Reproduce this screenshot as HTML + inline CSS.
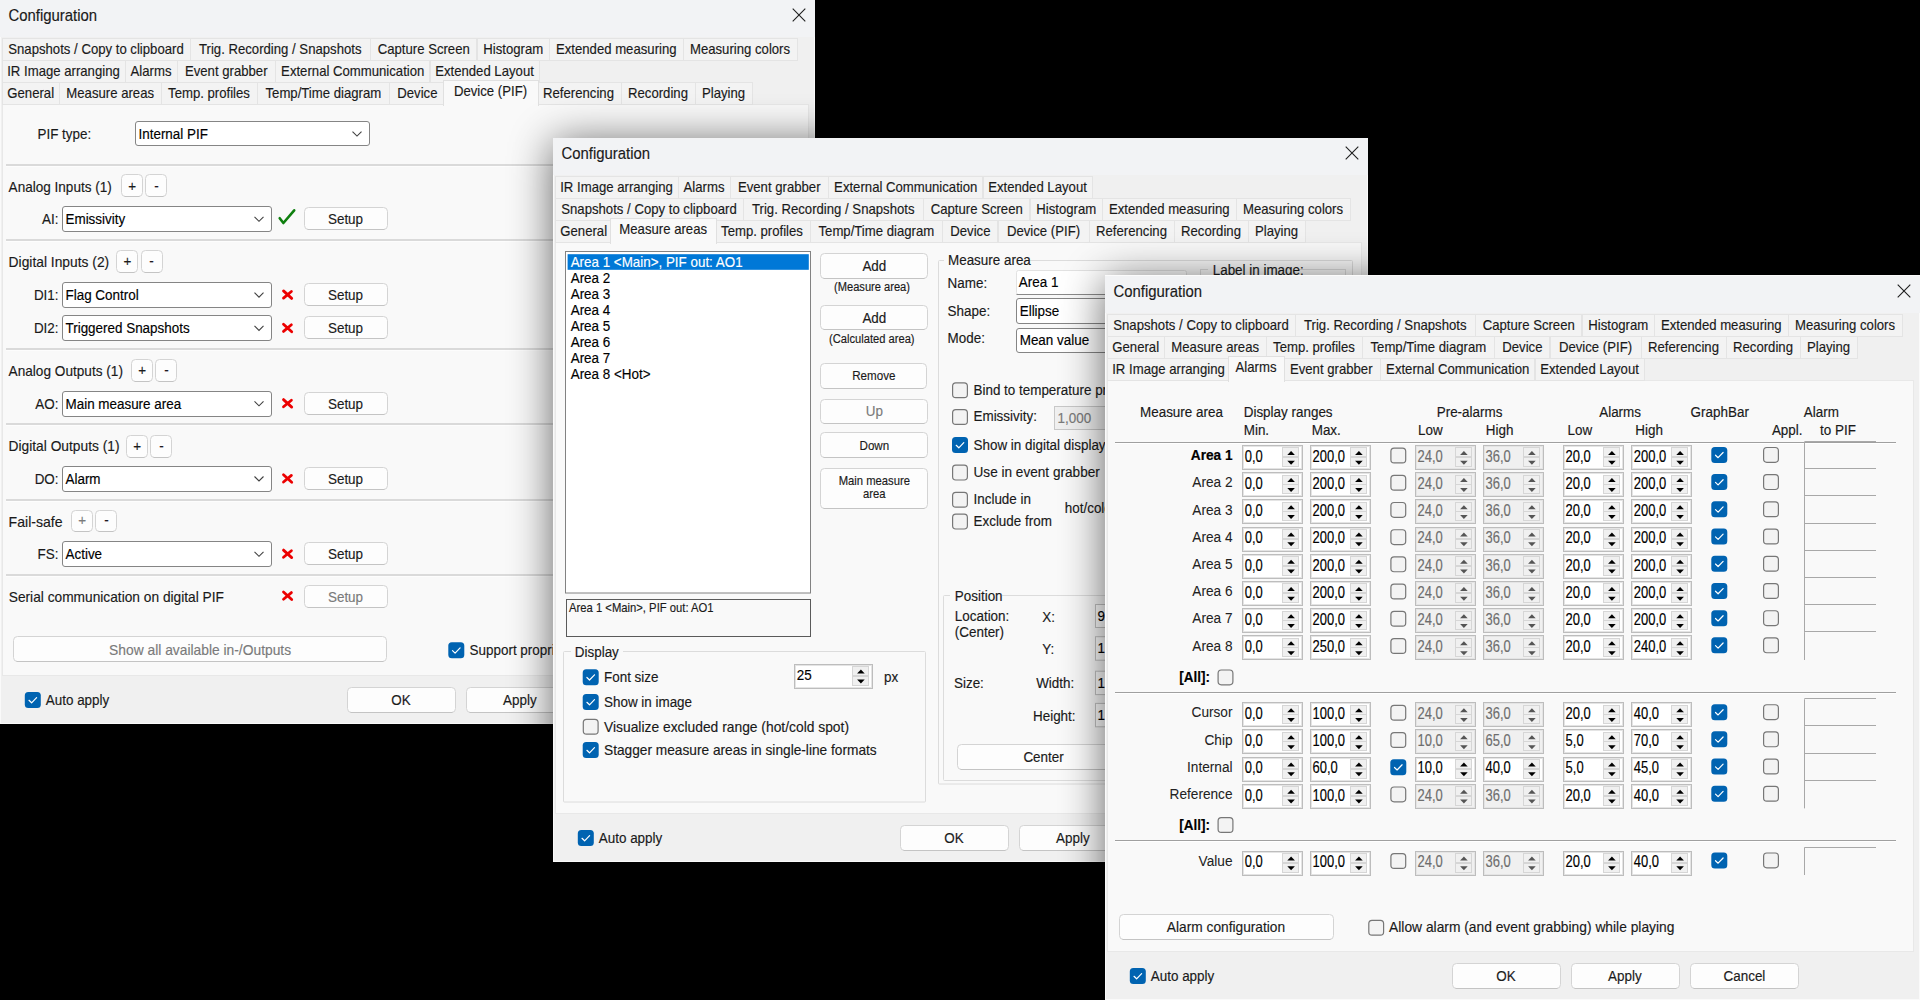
<!DOCTYPE html>
<html><head><meta charset="utf-8"><title>Configuration</title>
<style>html,body{margin:0;padding:0;background:#000;overflow:hidden;width:1920px;height:1000px}
svg{display:block;font-family:"Liberation Sans",sans-serif}</style></head>
<body>
<svg width="1920" height="1000" viewBox="0 0 1920 1000" font-family="Liberation Sans, sans-serif" font-size="13.5">
<defs><filter id="sh" x="-15%" y="-15%" width="130%" height="130%"><feGaussianBlur stdDeviation="22"/></filter></defs>
<rect x="0" y="0" width="1920" height="1000" fill="#000000" />
<g transform="translate(0,0)">
<rect x="0" y="0" width="815" height="724" fill="#f0f0f0" />
<rect x="0.5" y="0.5" width="814" height="723" fill="none" stroke="#fafafa" stroke-width="1" />
<rect x="0" y="0" width="815" height="37" fill="#f2f3f5" />
<text transform="translate(8.5,21.2) scale(0.95,1)" font-size="15.7" fill="#1a1a1a" stroke="#1a1a1a" stroke-width="0.15">Configuration</text>
<path d="M792.7,8.7 L805.3,21.3 M805.3,8.7 L792.7,21.3" stroke="#1f1f1f" fill="none" stroke-width="1.1" />
<rect x="2.5" y="104.5" width="806" height="571" fill="#f9f9f9" stroke="#e8e8e8" stroke-width="1" />
<rect x="2.5" y="38.5" width="188" height="22" fill="#f3f3f3" stroke="#e4e4e4" stroke-width="1" />
<text transform="translate(96,54) scale(0.94,1)" font-size="14" fill="#1a1a1a" text-anchor="middle" stroke="#1a1a1a" stroke-width="0.15">Snapshots / Copy to clipboard</text>
<rect x="190.5" y="38.5" width="180" height="22" fill="#f3f3f3" stroke="#e4e4e4" stroke-width="1" />
<text transform="translate(280.25,54) scale(0.94,1)" font-size="14" fill="#1a1a1a" text-anchor="middle" stroke="#1a1a1a" stroke-width="0.15">Trig. Recording / Snapshots</text>
<rect x="370.5" y="38.5" width="106" height="22" fill="#f3f3f3" stroke="#e4e4e4" stroke-width="1" />
<text transform="translate(423.75,54) scale(0.94,1)" font-size="14" fill="#1a1a1a" text-anchor="middle" stroke="#1a1a1a" stroke-width="0.15">Capture Screen</text>
<rect x="477.5" y="38.5" width="72" height="22" fill="#f3f3f3" stroke="#e4e4e4" stroke-width="1" />
<text transform="translate(513.25,54) scale(0.94,1)" font-size="14" fill="#1a1a1a" text-anchor="middle" stroke="#1a1a1a" stroke-width="0.15">Histogram</text>
<rect x="549.5" y="38.5" width="134" height="22" fill="#f3f3f3" stroke="#e4e4e4" stroke-width="1" />
<text transform="translate(616.25,54) scale(0.94,1)" font-size="14" fill="#1a1a1a" text-anchor="middle" stroke="#1a1a1a" stroke-width="0.15">Extended measuring</text>
<rect x="683.5" y="38.5" width="114" height="22" fill="#f3f3f3" stroke="#e4e4e4" stroke-width="1" />
<text transform="translate(740,54) scale(0.94,1)" font-size="14" fill="#1a1a1a" text-anchor="middle" stroke="#1a1a1a" stroke-width="0.15">Measuring colors</text>
<rect x="2.5" y="60.5" width="123" height="22" fill="#f3f3f3" stroke="#e4e4e4" stroke-width="1" />
<text transform="translate(63.5,76) scale(0.94,1)" font-size="14" fill="#1a1a1a" text-anchor="middle" stroke="#1a1a1a" stroke-width="0.15">IR Image arranging</text>
<rect x="125.5" y="60.5" width="52" height="22" fill="#f3f3f3" stroke="#e4e4e4" stroke-width="1" />
<text transform="translate(151,76) scale(0.94,1)" font-size="14" fill="#1a1a1a" text-anchor="middle" stroke="#1a1a1a" stroke-width="0.15">Alarms</text>
<rect x="177.5" y="60.5" width="98" height="22" fill="#f3f3f3" stroke="#e4e4e4" stroke-width="1" />
<text transform="translate(226.25,76) scale(0.94,1)" font-size="14" fill="#1a1a1a" text-anchor="middle" stroke="#1a1a1a" stroke-width="0.15">Event grabber</text>
<rect x="275.5" y="60.5" width="154" height="22" fill="#f3f3f3" stroke="#e4e4e4" stroke-width="1" />
<text transform="translate(352.75,76) scale(0.94,1)" font-size="14" fill="#1a1a1a" text-anchor="middle" stroke="#1a1a1a" stroke-width="0.15">External Communication</text>
<rect x="430.5" y="60.5" width="109" height="22" fill="#f3f3f3" stroke="#e4e4e4" stroke-width="1" />
<text transform="translate(484.5,76) scale(0.94,1)" font-size="14" fill="#1a1a1a" text-anchor="middle" stroke="#1a1a1a" stroke-width="0.15">Extended Layout</text>
<rect x="2.5" y="82.5" width="57" height="22" fill="#f3f3f3" stroke="#e4e4e4" stroke-width="1" />
<text transform="translate(30.7,98) scale(0.94,1)" font-size="14" fill="#1a1a1a" text-anchor="middle" stroke="#1a1a1a" stroke-width="0.15">General</text>
<rect x="59.5" y="82.5" width="102" height="22" fill="#f3f3f3" stroke="#e4e4e4" stroke-width="1" />
<text transform="translate(110.2,98) scale(0.94,1)" font-size="14" fill="#1a1a1a" text-anchor="middle" stroke="#1a1a1a" stroke-width="0.15">Measure areas</text>
<rect x="161.5" y="82.5" width="96" height="22" fill="#f3f3f3" stroke="#e4e4e4" stroke-width="1" />
<text transform="translate(209,98) scale(0.94,1)" font-size="14" fill="#1a1a1a" text-anchor="middle" stroke="#1a1a1a" stroke-width="0.15">Temp. profiles</text>
<rect x="257.5" y="82.5" width="133" height="22" fill="#f3f3f3" stroke="#e4e4e4" stroke-width="1" />
<text transform="translate(323.35,98) scale(0.94,1)" font-size="14" fill="#1a1a1a" text-anchor="middle" stroke="#1a1a1a" stroke-width="0.15">Temp/Time diagram</text>
<rect x="389.5" y="82.5" width="55" height="22" fill="#f3f3f3" stroke="#e4e4e4" stroke-width="1" />
<text transform="translate(417.35,98) scale(0.94,1)" font-size="14" fill="#1a1a1a" text-anchor="middle" stroke="#1a1a1a" stroke-width="0.15">Device</text>
<rect x="536.5" y="82.5" width="85" height="22" fill="#f3f3f3" stroke="#e4e4e4" stroke-width="1" />
<text transform="translate(578.5,98) scale(0.94,1)" font-size="14" fill="#1a1a1a" text-anchor="middle" stroke="#1a1a1a" stroke-width="0.15">Referencing</text>
<rect x="621.5" y="82.5" width="74" height="22" fill="#f3f3f3" stroke="#e4e4e4" stroke-width="1" />
<text transform="translate(658,98) scale(0.94,1)" font-size="14" fill="#1a1a1a" text-anchor="middle" stroke="#1a1a1a" stroke-width="0.15">Recording</text>
<rect x="695.5" y="82.5" width="57" height="22" fill="#f3f3f3" stroke="#e4e4e4" stroke-width="1" />
<text transform="translate(723.5,98) scale(0.94,1)" font-size="14" fill="#1a1a1a" text-anchor="middle" stroke="#1a1a1a" stroke-width="0.15">Playing</text>
<rect x="443.5" y="80.5" width="95" height="25" fill="#f9f9f9" stroke="#e0e0e0" stroke-width="1" />
<rect x="444" y="103" width="94" height="4" fill="#f9f9f9" />
<text transform="translate(490.5,96) scale(0.94,1)" font-size="14" fill="#1a1a1a" text-anchor="middle" stroke="#1a1a1a" stroke-width="0.15">Device (PIF)</text>
<rect x="24.8" y="692" width="16" height="16" fill="#0063b1" rx="3.5" />
<path d="M29,700.3 L31.6,702.8 L36.6,697.6" stroke="#ffffff" fill="none" stroke-width="1.2" stroke-linecap="round" stroke-linejoin="round"/>
<text transform="translate(45.8,705) scale(0.94,1)" font-size="14.3" fill="#1a1a1a" stroke="#1a1a1a" stroke-width="0.15">Auto apply</text>
<rect x="347.5" y="687.5" width="108" height="25" fill="#fdfdfd" stroke="#d4d4d4" stroke-width="1" rx="4" />
<line x1="350.5" y1="712.5" x2="452.5" y2="712.5" stroke="#c4c4c4" stroke-width="1" />
<text transform="translate(401,705) scale(0.94,1)" font-size="14.3" fill="#1b1b1b" text-anchor="middle" stroke="#1b1b1b" stroke-width="0.15">OK</text>
<rect x="466.5" y="687.5" width="108" height="25" fill="#fdfdfd" stroke="#d4d4d4" stroke-width="1" rx="4" />
<line x1="469.5" y1="712.5" x2="571.5" y2="712.5" stroke="#c4c4c4" stroke-width="1" />
<text transform="translate(519.85,705) scale(0.94,1)" font-size="14.3" fill="#1b1b1b" text-anchor="middle" stroke="#1b1b1b" stroke-width="0.15">Apply</text>
<rect x="585.5" y="687.5" width="108" height="25" fill="#fdfdfd" stroke="#d4d4d4" stroke-width="1" rx="4" />
<line x1="588.5" y1="712.5" x2="690.5" y2="712.5" stroke="#c4c4c4" stroke-width="1" />
<text transform="translate(639.45,705) scale(0.94,1)" font-size="14.3" fill="#1b1b1b" text-anchor="middle" stroke="#1b1b1b" stroke-width="0.15">Cancel</text>
</g>
<text transform="translate(37.5,138.5) scale(0.94,1)" font-size="14.3" fill="#1a1a1a" stroke="#1a1a1a" stroke-width="0.15">PIF type:</text>
<rect x="135.5" y="121.5" width="234" height="24" fill="#ffffff" stroke="#858585" stroke-width="1" rx="2.5" />
<text transform="translate(138.5,138.75) scale(0.94,1)" font-size="14.3" fill="#000" stroke="#000" stroke-width="0.15">Internal PIF</text>
<path d="M352.5,131.55 L357,136.05 L361.5,131.55" stroke="#404040" fill="none" stroke-width="1.1" />
<rect x="6" y="164" width="803" height="2" fill="#dadada" />
<rect x="6" y="166" width="803" height="1" fill="#fdfdfd" />
<rect x="6" y="239" width="803" height="2" fill="#dadada" />
<rect x="6" y="241" width="803" height="1" fill="#fdfdfd" />
<rect x="6" y="348" width="803" height="2" fill="#dadada" />
<rect x="6" y="350" width="803" height="1" fill="#fdfdfd" />
<rect x="6" y="423" width="803" height="2" fill="#dadada" />
<rect x="6" y="425" width="803" height="1" fill="#fdfdfd" />
<rect x="6" y="499" width="803" height="2" fill="#dadada" />
<rect x="6" y="501" width="803" height="1" fill="#fdfdfd" />
<rect x="6" y="574" width="803" height="2" fill="#dadada" />
<rect x="6" y="576" width="803" height="1" fill="#fdfdfd" />
<text x="8.6" y="191.7" font-size="14.3" fill="#1a1a1a" textLength="103.2" lengthAdjust="spacingAndGlyphs" stroke="#1a1a1a" stroke-width="0.15">Analog Inputs (1)</text>
<rect x="121.5" y="174.5" width="21" height="22" fill="#fdfdfd" stroke="#d4d4d4" stroke-width="1" rx="4" />
<line x1="124.5" y1="196.5" x2="139.5" y2="196.5" stroke="#c4c4c4" stroke-width="1" />
<text transform="translate(132.1,190.5) scale(0.94,1)" font-size="14.3" fill="#1b1b1b" text-anchor="middle" stroke="#1b1b1b" stroke-width="0.15">+</text>
<rect x="145.5" y="174.5" width="21" height="22" fill="#fdfdfd" stroke="#d4d4d4" stroke-width="1" rx="4" />
<line x1="148.5" y1="196.5" x2="163.5" y2="196.5" stroke="#c4c4c4" stroke-width="1" />
<text transform="translate(156.4,190.5) scale(0.94,1)" font-size="14.3" fill="#1b1b1b" text-anchor="middle" stroke="#1b1b1b" stroke-width="0.15">-</text>
<text transform="translate(58.5,224) scale(0.94,1)" font-size="14.3" fill="#1a1a1a" text-anchor="end" stroke="#1a1a1a" stroke-width="0.15">AI:</text>
<rect x="62.5" y="206.5" width="209" height="25" fill="#ffffff" stroke="#858585" stroke-width="1" rx="2.5" />
<text transform="translate(65.5,224) scale(0.94,1)" font-size="14.3" fill="#000" stroke="#000" stroke-width="0.15">Emissivity</text>
<path d="M254.5,216.8 L259,221.3 L263.5,216.8" stroke="#404040" fill="none" stroke-width="1.1" />
<path d="M279.7,218.2 L283.4,223 L294.2,210.3" stroke="#0e7f0e" fill="none" stroke-width="2.6" stroke-linecap="round" stroke-linejoin="round"/>
<rect x="304.5" y="207.5" width="83" height="22" fill="#fdfdfd" stroke="#d4d4d4" stroke-width="1" rx="4" />
<line x1="307.5" y1="229.5" x2="384.5" y2="229.5" stroke="#c4c4c4" stroke-width="1" />
<text transform="translate(345.5,224.2) scale(0.94,1)" font-size="14.3" fill="#1b1b1b" text-anchor="middle" stroke="#1b1b1b" stroke-width="0.15">Setup</text>
<text x="8.6" y="266.8" font-size="14.3" fill="#1a1a1a" textLength="100.6" lengthAdjust="spacingAndGlyphs" stroke="#1a1a1a" stroke-width="0.15">Digital Inputs (2)</text>
<rect x="116.5" y="250.5" width="21" height="22" fill="#fdfdfd" stroke="#d4d4d4" stroke-width="1" rx="4" />
<line x1="119.5" y1="272.5" x2="134.5" y2="272.5" stroke="#c4c4c4" stroke-width="1" />
<text transform="translate(127.3,266) scale(0.94,1)" font-size="14.3" fill="#1b1b1b" text-anchor="middle" stroke="#1b1b1b" stroke-width="0.15">+</text>
<rect x="141.5" y="250.5" width="21" height="22" fill="#fdfdfd" stroke="#d4d4d4" stroke-width="1" rx="4" />
<line x1="144.5" y1="272.5" x2="159.5" y2="272.5" stroke="#c4c4c4" stroke-width="1" />
<text transform="translate(151.6,266) scale(0.94,1)" font-size="14.3" fill="#1b1b1b" text-anchor="middle" stroke="#1b1b1b" stroke-width="0.15">-</text>
<text transform="translate(58.5,299.8) scale(0.94,1)" font-size="14.3" fill="#1a1a1a" text-anchor="end" stroke="#1a1a1a" stroke-width="0.15">DI1:</text>
<rect x="62.5" y="282.5" width="209" height="25" fill="#ffffff" stroke="#858585" stroke-width="1" rx="2.5" />
<text transform="translate(65.5,299.8) scale(0.94,1)" font-size="14.3" fill="#000" stroke="#000" stroke-width="0.15">Flag Control</text>
<path d="M254.5,292.6 L259,297.1 L263.5,292.6" stroke="#404040" fill="none" stroke-width="1.1" />
<path d="M283.5,290.9 L291.7,298.4 M291.4,291.5 L283.5,298.1" stroke="#ec0000" fill="none" stroke-width="2.8" stroke-linecap="round"/>
<rect x="304.5" y="283.5" width="83" height="22" fill="#fdfdfd" stroke="#d4d4d4" stroke-width="1" rx="4" />
<line x1="307.5" y1="305.5" x2="384.5" y2="305.5" stroke="#c4c4c4" stroke-width="1" />
<text transform="translate(345.5,300) scale(0.94,1)" font-size="14.3" fill="#1b1b1b" text-anchor="middle" stroke="#1b1b1b" stroke-width="0.15">Setup</text>
<text transform="translate(58.5,333.1) scale(0.94,1)" font-size="14.3" fill="#1a1a1a" text-anchor="end" stroke="#1a1a1a" stroke-width="0.15">DI2:</text>
<rect x="62.5" y="315.5" width="209" height="25" fill="#ffffff" stroke="#858585" stroke-width="1" rx="2.5" />
<text transform="translate(65.5,333.1) scale(0.94,1)" font-size="14.3" fill="#000" stroke="#000" stroke-width="0.15">Triggered Snapshots</text>
<path d="M254.5,325.9 L259,330.4 L263.5,325.9" stroke="#404040" fill="none" stroke-width="1.1" />
<path d="M283.5,324.2 L291.7,331.7 M291.4,324.8 L283.5,331.4" stroke="#ec0000" fill="none" stroke-width="2.8" stroke-linecap="round"/>
<rect x="304.5" y="316.5" width="83" height="22" fill="#fdfdfd" stroke="#d4d4d4" stroke-width="1" rx="4" />
<line x1="307.5" y1="338.5" x2="384.5" y2="338.5" stroke="#c4c4c4" stroke-width="1" />
<text transform="translate(345.5,333.3) scale(0.94,1)" font-size="14.3" fill="#1b1b1b" text-anchor="middle" stroke="#1b1b1b" stroke-width="0.15">Setup</text>
<text x="8.6" y="375.6" font-size="14.3" fill="#1a1a1a" textLength="114.4" lengthAdjust="spacingAndGlyphs" stroke="#1a1a1a" stroke-width="0.15">Analog Outputs (1)</text>
<rect x="131.5" y="359.5" width="21" height="22" fill="#fdfdfd" stroke="#d4d4d4" stroke-width="1" rx="4" />
<line x1="134.5" y1="381.5" x2="149.5" y2="381.5" stroke="#c4c4c4" stroke-width="1" />
<text transform="translate(142.1,374.5) scale(0.94,1)" font-size="14.3" fill="#1b1b1b" text-anchor="middle" stroke="#1b1b1b" stroke-width="0.15">+</text>
<rect x="155.5" y="359.5" width="21" height="22" fill="#fdfdfd" stroke="#d4d4d4" stroke-width="1" rx="4" />
<line x1="158.5" y1="381.5" x2="173.5" y2="381.5" stroke="#c4c4c4" stroke-width="1" />
<text transform="translate(166.4,374.5) scale(0.94,1)" font-size="14.3" fill="#1b1b1b" text-anchor="middle" stroke="#1b1b1b" stroke-width="0.15">-</text>
<text transform="translate(58.5,408.5) scale(0.94,1)" font-size="14.3" fill="#1a1a1a" text-anchor="end" stroke="#1a1a1a" stroke-width="0.15">AO:</text>
<rect x="62.5" y="391.5" width="209" height="25" fill="#ffffff" stroke="#858585" stroke-width="1" rx="2.5" />
<text transform="translate(65.5,408.5) scale(0.94,1)" font-size="14.3" fill="#000" stroke="#000" stroke-width="0.15">Main measure area</text>
<path d="M254.5,401.3 L259,405.8 L263.5,401.3" stroke="#404040" fill="none" stroke-width="1.1" />
<path d="M283.5,399.6 L291.7,407.1 M291.4,400.2 L283.5,406.8" stroke="#ec0000" fill="none" stroke-width="2.8" stroke-linecap="round"/>
<rect x="304.5" y="392.5" width="83" height="22" fill="#fdfdfd" stroke="#d4d4d4" stroke-width="1" rx="4" />
<line x1="307.5" y1="414.5" x2="384.5" y2="414.5" stroke="#c4c4c4" stroke-width="1" />
<text transform="translate(345.5,408.7) scale(0.94,1)" font-size="14.3" fill="#1b1b1b" text-anchor="middle" stroke="#1b1b1b" stroke-width="0.15">Setup</text>
<text x="8.6" y="451.2" font-size="14.3" fill="#1a1a1a" textLength="110.9" lengthAdjust="spacingAndGlyphs" stroke="#1a1a1a" stroke-width="0.15">Digital Outputs (1)</text>
<rect x="126.5" y="435.5" width="21" height="22" fill="#fdfdfd" stroke="#d4d4d4" stroke-width="1" rx="4" />
<line x1="129.5" y1="457.5" x2="144.5" y2="457.5" stroke="#c4c4c4" stroke-width="1" />
<text transform="translate(137.1,450.5) scale(0.94,1)" font-size="14.3" fill="#1b1b1b" text-anchor="middle" stroke="#1b1b1b" stroke-width="0.15">+</text>
<rect x="150.5" y="435.5" width="21" height="22" fill="#fdfdfd" stroke="#d4d4d4" stroke-width="1" rx="4" />
<line x1="153.5" y1="457.5" x2="168.5" y2="457.5" stroke="#c4c4c4" stroke-width="1" />
<text transform="translate(161.4,450.5) scale(0.94,1)" font-size="14.3" fill="#1b1b1b" text-anchor="middle" stroke="#1b1b1b" stroke-width="0.15">-</text>
<text transform="translate(58.5,483.7) scale(0.94,1)" font-size="14.3" fill="#1a1a1a" text-anchor="end" stroke="#1a1a1a" stroke-width="0.15">DO:</text>
<rect x="62.5" y="466.5" width="209" height="25" fill="#ffffff" stroke="#858585" stroke-width="1" rx="2.5" />
<text transform="translate(65.5,483.7) scale(0.94,1)" font-size="14.3" fill="#000" stroke="#000" stroke-width="0.15">Alarm</text>
<path d="M254.5,476.5 L259,481 L263.5,476.5" stroke="#404040" fill="none" stroke-width="1.1" />
<path d="M283.5,474.8 L291.7,482.3 M291.4,475.4 L283.5,482" stroke="#ec0000" fill="none" stroke-width="2.8" stroke-linecap="round"/>
<rect x="304.5" y="467.5" width="83" height="22" fill="#fdfdfd" stroke="#d4d4d4" stroke-width="1" rx="4" />
<line x1="307.5" y1="489.5" x2="384.5" y2="489.5" stroke="#c4c4c4" stroke-width="1" />
<text transform="translate(345.5,483.9) scale(0.94,1)" font-size="14.3" fill="#1b1b1b" text-anchor="middle" stroke="#1b1b1b" stroke-width="0.15">Setup</text>
<text x="8.6" y="526.5" font-size="14.3" fill="#1a1a1a" textLength="54" lengthAdjust="spacingAndGlyphs" stroke="#1a1a1a" stroke-width="0.15">Fail-safe</text>
<rect x="71.5" y="510.5" width="21" height="21" fill="#fdfdfd" stroke="#d4d4d4" stroke-width="1" rx="4" />
<line x1="74.5" y1="531.5" x2="89.5" y2="531.5" stroke="#c4c4c4" stroke-width="1" />
<text transform="translate(82.1,525) scale(0.94,1)" font-size="14.3" fill="#7a7a7a" text-anchor="middle" stroke="#7a7a7a" stroke-width="0.15">+</text>
<rect x="95.5" y="510.5" width="21" height="21" fill="#fdfdfd" stroke="#d4d4d4" stroke-width="1" rx="4" />
<line x1="98.5" y1="531.5" x2="113.5" y2="531.5" stroke="#c4c4c4" stroke-width="1" />
<text transform="translate(106.4,525) scale(0.94,1)" font-size="14.3" fill="#1b1b1b" text-anchor="middle" stroke="#1b1b1b" stroke-width="0.15">-</text>
<text transform="translate(58.5,559) scale(0.94,1)" font-size="14.3" fill="#1a1a1a" text-anchor="end" stroke="#1a1a1a" stroke-width="0.15">FS:</text>
<rect x="62.5" y="541.5" width="209" height="25" fill="#ffffff" stroke="#858585" stroke-width="1" rx="2.5" />
<text transform="translate(65.5,559) scale(0.94,1)" font-size="14.3" fill="#000" stroke="#000" stroke-width="0.15">Active</text>
<path d="M254.5,551.8 L259,556.3 L263.5,551.8" stroke="#404040" fill="none" stroke-width="1.1" />
<path d="M283.5,550.1 L291.7,557.6 M291.4,550.7 L283.5,557.3" stroke="#ec0000" fill="none" stroke-width="2.8" stroke-linecap="round"/>
<rect x="304.5" y="542.5" width="83" height="22" fill="#fdfdfd" stroke="#d4d4d4" stroke-width="1" rx="4" />
<line x1="307.5" y1="564.5" x2="384.5" y2="564.5" stroke="#c4c4c4" stroke-width="1" />
<text transform="translate(345.5,559.2) scale(0.94,1)" font-size="14.3" fill="#1b1b1b" text-anchor="middle" stroke="#1b1b1b" stroke-width="0.15">Setup</text>
<text x="8.75" y="602" font-size="14.3" fill="#1a1a1a" textLength="215.2" lengthAdjust="spacingAndGlyphs" stroke="#1a1a1a" stroke-width="0.15">Serial communication on digital PIF</text>
<path d="M283.5,592 L291.7,599.5 M291.4,592.6 L283.5,599.2" stroke="#ec0000" fill="none" stroke-width="2.8" stroke-linecap="round"/>
<rect x="304.5" y="585.5" width="83" height="22" fill="#fdfdfd" stroke="#d4d4d4" stroke-width="1" rx="4" />
<line x1="307.5" y1="607.5" x2="384.5" y2="607.5" stroke="#c4c4c4" stroke-width="1" />
<text transform="translate(345.5,601.5) scale(0.94,1)" font-size="14.3" fill="#7a7a7a" text-anchor="middle" stroke="#7a7a7a" stroke-width="0.15">Setup</text>
<rect x="13.5" y="636.5" width="373" height="25" fill="#fdfdfd" stroke="#d4d4d4" stroke-width="1" rx="4" />
<line x1="16.5" y1="661.5" x2="383.5" y2="661.5" stroke="#c4c4c4" stroke-width="1" />
<text x="200.1" y="654.5" font-size="14.3" fill="#7a7a7a" text-anchor="middle" textLength="182" lengthAdjust="spacingAndGlyphs" stroke="#7a7a7a" stroke-width="0.15">Show all available in-/Outputs</text>
<rect x="448.3" y="642.3" width="16" height="16" fill="#0063b1" rx="3.5" />
<path d="M452.5,650.6 L455.1,653.1 L460.1,647.9" stroke="#ffffff" fill="none" stroke-width="1.2" stroke-linecap="round" stroke-linejoin="round"/>
<text transform="translate(469.6,655) scale(0.94,1)" font-size="14.3" fill="#1a1a1a" stroke="#1a1a1a" stroke-width="0.15">Support proprietary</text>
<rect x="553" y="142" width="815" height="724" fill="#000" opacity="0.6" filter="url(#sh)"/>
<g transform="translate(553,138)">
<rect x="0" y="0" width="815" height="724" fill="#f0f0f0" />
<rect x="0.5" y="0.5" width="814" height="723" fill="none" stroke="#fafafa" stroke-width="1" />
<rect x="0" y="0" width="815" height="37" fill="#f2f3f5" />
<text transform="translate(8.5,21.2) scale(0.95,1)" font-size="15.7" fill="#1a1a1a" stroke="#1a1a1a" stroke-width="0.15">Configuration</text>
<path d="M792.7,8.7 L805.3,21.3 M805.3,8.7 L792.7,21.3" stroke="#1f1f1f" fill="none" stroke-width="1.1" />
<rect x="2.5" y="104.5" width="806" height="571" fill="#f9f9f9" stroke="#e8e8e8" stroke-width="1" />
<rect x="2.5" y="38.5" width="123" height="22" fill="#f3f3f3" stroke="#e4e4e4" stroke-width="1" />
<text transform="translate(63.5,54) scale(0.94,1)" font-size="14" fill="#1a1a1a" text-anchor="middle" stroke="#1a1a1a" stroke-width="0.15">IR Image arranging</text>
<rect x="125.5" y="38.5" width="52" height="22" fill="#f3f3f3" stroke="#e4e4e4" stroke-width="1" />
<text transform="translate(151,54) scale(0.94,1)" font-size="14" fill="#1a1a1a" text-anchor="middle" stroke="#1a1a1a" stroke-width="0.15">Alarms</text>
<rect x="177.5" y="38.5" width="98" height="22" fill="#f3f3f3" stroke="#e4e4e4" stroke-width="1" />
<text transform="translate(226.25,54) scale(0.94,1)" font-size="14" fill="#1a1a1a" text-anchor="middle" stroke="#1a1a1a" stroke-width="0.15">Event grabber</text>
<rect x="275.5" y="38.5" width="154" height="22" fill="#f3f3f3" stroke="#e4e4e4" stroke-width="1" />
<text transform="translate(352.75,54) scale(0.94,1)" font-size="14" fill="#1a1a1a" text-anchor="middle" stroke="#1a1a1a" stroke-width="0.15">External Communication</text>
<rect x="430.5" y="38.5" width="109" height="22" fill="#f3f3f3" stroke="#e4e4e4" stroke-width="1" />
<text transform="translate(484.5,54) scale(0.94,1)" font-size="14" fill="#1a1a1a" text-anchor="middle" stroke="#1a1a1a" stroke-width="0.15">Extended Layout</text>
<rect x="2.5" y="60.5" width="188" height="22" fill="#f3f3f3" stroke="#e4e4e4" stroke-width="1" />
<text transform="translate(96,76) scale(0.94,1)" font-size="14" fill="#1a1a1a" text-anchor="middle" stroke="#1a1a1a" stroke-width="0.15">Snapshots / Copy to clipboard</text>
<rect x="190.5" y="60.5" width="180" height="22" fill="#f3f3f3" stroke="#e4e4e4" stroke-width="1" />
<text transform="translate(280.25,76) scale(0.94,1)" font-size="14" fill="#1a1a1a" text-anchor="middle" stroke="#1a1a1a" stroke-width="0.15">Trig. Recording / Snapshots</text>
<rect x="370.5" y="60.5" width="106" height="22" fill="#f3f3f3" stroke="#e4e4e4" stroke-width="1" />
<text transform="translate(423.75,76) scale(0.94,1)" font-size="14" fill="#1a1a1a" text-anchor="middle" stroke="#1a1a1a" stroke-width="0.15">Capture Screen</text>
<rect x="477.5" y="60.5" width="72" height="22" fill="#f3f3f3" stroke="#e4e4e4" stroke-width="1" />
<text transform="translate(513.25,76) scale(0.94,1)" font-size="14" fill="#1a1a1a" text-anchor="middle" stroke="#1a1a1a" stroke-width="0.15">Histogram</text>
<rect x="549.5" y="60.5" width="134" height="22" fill="#f3f3f3" stroke="#e4e4e4" stroke-width="1" />
<text transform="translate(616.25,76) scale(0.94,1)" font-size="14" fill="#1a1a1a" text-anchor="middle" stroke="#1a1a1a" stroke-width="0.15">Extended measuring</text>
<rect x="683.5" y="60.5" width="114" height="22" fill="#f3f3f3" stroke="#e4e4e4" stroke-width="1" />
<text transform="translate(740,76) scale(0.94,1)" font-size="14" fill="#1a1a1a" text-anchor="middle" stroke="#1a1a1a" stroke-width="0.15">Measuring colors</text>
<rect x="2.5" y="82.5" width="57" height="22" fill="#f3f3f3" stroke="#e4e4e4" stroke-width="1" />
<text transform="translate(30.7,98) scale(0.94,1)" font-size="14" fill="#1a1a1a" text-anchor="middle" stroke="#1a1a1a" stroke-width="0.15">General</text>
<rect x="161.5" y="82.5" width="96" height="22" fill="#f3f3f3" stroke="#e4e4e4" stroke-width="1" />
<text transform="translate(209,98) scale(0.94,1)" font-size="14" fill="#1a1a1a" text-anchor="middle" stroke="#1a1a1a" stroke-width="0.15">Temp. profiles</text>
<rect x="257.5" y="82.5" width="133" height="22" fill="#f3f3f3" stroke="#e4e4e4" stroke-width="1" />
<text transform="translate(323.35,98) scale(0.94,1)" font-size="14" fill="#1a1a1a" text-anchor="middle" stroke="#1a1a1a" stroke-width="0.15">Temp/Time diagram</text>
<rect x="389.5" y="82.5" width="55" height="22" fill="#f3f3f3" stroke="#e4e4e4" stroke-width="1" />
<text transform="translate(417.35,98) scale(0.94,1)" font-size="14" fill="#1a1a1a" text-anchor="middle" stroke="#1a1a1a" stroke-width="0.15">Device</text>
<rect x="445.5" y="82.5" width="91" height="22" fill="#f3f3f3" stroke="#e4e4e4" stroke-width="1" />
<text transform="translate(490.5,98) scale(0.94,1)" font-size="14" fill="#1a1a1a" text-anchor="middle" stroke="#1a1a1a" stroke-width="0.15">Device (PIF)</text>
<rect x="536.5" y="82.5" width="85" height="22" fill="#f3f3f3" stroke="#e4e4e4" stroke-width="1" />
<text transform="translate(578.5,98) scale(0.94,1)" font-size="14" fill="#1a1a1a" text-anchor="middle" stroke="#1a1a1a" stroke-width="0.15">Referencing</text>
<rect x="621.5" y="82.5" width="74" height="22" fill="#f3f3f3" stroke="#e4e4e4" stroke-width="1" />
<text transform="translate(658,98) scale(0.94,1)" font-size="14" fill="#1a1a1a" text-anchor="middle" stroke="#1a1a1a" stroke-width="0.15">Recording</text>
<rect x="695.5" y="82.5" width="57" height="22" fill="#f3f3f3" stroke="#e4e4e4" stroke-width="1" />
<text transform="translate(723.5,98) scale(0.94,1)" font-size="14" fill="#1a1a1a" text-anchor="middle" stroke="#1a1a1a" stroke-width="0.15">Playing</text>
<rect x="57.5" y="80.5" width="106" height="25" fill="#f9f9f9" stroke="#e0e0e0" stroke-width="1" />
<rect x="58" y="103" width="105" height="4" fill="#f9f9f9" />
<text transform="translate(110.2,96) scale(0.94,1)" font-size="14" fill="#1a1a1a" text-anchor="middle" stroke="#1a1a1a" stroke-width="0.15">Measure areas</text>
<rect x="24.8" y="692" width="16" height="16" fill="#0063b1" rx="3.5" />
<path d="M29,700.3 L31.6,702.8 L36.6,697.6" stroke="#ffffff" fill="none" stroke-width="1.2" stroke-linecap="round" stroke-linejoin="round"/>
<text transform="translate(45.8,705) scale(0.94,1)" font-size="14.3" fill="#1a1a1a" stroke="#1a1a1a" stroke-width="0.15">Auto apply</text>
<rect x="347.5" y="687.5" width="108" height="25" fill="#fdfdfd" stroke="#d4d4d4" stroke-width="1" rx="4" />
<line x1="350.5" y1="712.5" x2="452.5" y2="712.5" stroke="#c4c4c4" stroke-width="1" />
<text transform="translate(401,705) scale(0.94,1)" font-size="14.3" fill="#1b1b1b" text-anchor="middle" stroke="#1b1b1b" stroke-width="0.15">OK</text>
<rect x="466.5" y="687.5" width="108" height="25" fill="#fdfdfd" stroke="#d4d4d4" stroke-width="1" rx="4" />
<line x1="469.5" y1="712.5" x2="571.5" y2="712.5" stroke="#c4c4c4" stroke-width="1" />
<text transform="translate(519.85,705) scale(0.94,1)" font-size="14.3" fill="#1b1b1b" text-anchor="middle" stroke="#1b1b1b" stroke-width="0.15">Apply</text>
<rect x="585.5" y="687.5" width="108" height="25" fill="#fdfdfd" stroke="#d4d4d4" stroke-width="1" rx="4" />
<line x1="588.5" y1="712.5" x2="690.5" y2="712.5" stroke="#c4c4c4" stroke-width="1" />
<text transform="translate(639.45,705) scale(0.94,1)" font-size="14.3" fill="#1b1b1b" text-anchor="middle" stroke="#1b1b1b" stroke-width="0.15">Cancel</text>
</g>
<rect x="565.5" y="251.5" width="245" height="341.5" fill="#ffffff" stroke="#828282" stroke-width="1" />
<rect x="567.6" y="254.2" width="241.2" height="15.6" fill="#0078d7" />
<text x="570.7" y="267" font-size="14.3" fill="#ffffff" textLength="171.9" lengthAdjust="spacingAndGlyphs" stroke="#ffffff" stroke-width="0.15">Area 1 &lt;Main&gt;, PIF out: AO1</text>
<text transform="translate(570.7,283) scale(0.94,1)" font-size="14.3" fill="#000" stroke="#000" stroke-width="0.15">Area 2</text>
<text transform="translate(570.7,299) scale(0.94,1)" font-size="14.3" fill="#000" stroke="#000" stroke-width="0.15">Area 3</text>
<text transform="translate(570.7,315) scale(0.94,1)" font-size="14.3" fill="#000" stroke="#000" stroke-width="0.15">Area 4</text>
<text transform="translate(570.7,331) scale(0.94,1)" font-size="14.3" fill="#000" stroke="#000" stroke-width="0.15">Area 5</text>
<text transform="translate(570.7,347) scale(0.94,1)" font-size="14.3" fill="#000" stroke="#000" stroke-width="0.15">Area 6</text>
<text transform="translate(570.7,363) scale(0.94,1)" font-size="14.3" fill="#000" stroke="#000" stroke-width="0.15">Area 7</text>
<text transform="translate(570.7,379) scale(0.94,1)" font-size="14.3" fill="#000" stroke="#000" stroke-width="0.15">Area 8 &lt;Hot&gt;</text>
<rect x="566.5" y="599.5" width="244" height="37" fill="#f9f9f9" stroke="#5a5a5a" stroke-width="1" />
<text transform="translate(569,612) scale(0.94,1)" font-size="12" fill="#1a1a1a" stroke="#1a1a1a" stroke-width="0.15">Area 1 &lt;Main&gt;, PIF out: AO1</text>
<rect x="820.5" y="253.5" width="107" height="25" fill="#fdfdfd" stroke="#d4d4d4" stroke-width="1" rx="4" />
<line x1="823.5" y1="278.5" x2="924.5" y2="278.5" stroke="#c4c4c4" stroke-width="1" />
<text transform="translate(874.35,271) scale(0.94,1)" font-size="14.3" fill="#1b1b1b" text-anchor="middle" stroke="#1b1b1b" stroke-width="0.15">Add</text>
<text x="872" y="291" font-size="12" fill="#1a1a1a" text-anchor="middle" textLength="76" lengthAdjust="spacingAndGlyphs" stroke="#1a1a1a" stroke-width="0.15">(Measure area)</text>
<rect x="820.5" y="305.5" width="107" height="24" fill="#fdfdfd" stroke="#d4d4d4" stroke-width="1" rx="4" />
<line x1="823.5" y1="329.5" x2="924.5" y2="329.5" stroke="#c4c4c4" stroke-width="1" />
<text transform="translate(874.35,323) scale(0.94,1)" font-size="14.3" fill="#1b1b1b" text-anchor="middle" stroke="#1b1b1b" stroke-width="0.15">Add</text>
<text x="871.8" y="343" font-size="12" fill="#1a1a1a" text-anchor="middle" textLength="85.5" lengthAdjust="spacingAndGlyphs" stroke="#1a1a1a" stroke-width="0.15">(Calculated area)</text>
<rect x="820.5" y="363.5" width="106" height="25" fill="#fdfdfd" stroke="#d4d4d4" stroke-width="1" rx="4" />
<line x1="823.5" y1="388.5" x2="923.5" y2="388.5" stroke="#c4c4c4" stroke-width="1" />
<text transform="translate(873.85,380) scale(0.93,1)" font-size="12.5" fill="#1b1b1b" text-anchor="middle" stroke="#1b1b1b" stroke-width="0.15">Remove</text>
<rect x="820.5" y="399.5" width="107" height="24" fill="#fdfdfd" stroke="#d4d4d4" stroke-width="1" rx="4" />
<line x1="823.5" y1="423.5" x2="924.5" y2="423.5" stroke="#c4c4c4" stroke-width="1" />
<text transform="translate(874.35,416) scale(0.94,1)" font-size="14.3" fill="#7a7a7a" text-anchor="middle" stroke="#7a7a7a" stroke-width="0.15">Up</text>
<rect x="820.5" y="432.5" width="107" height="25" fill="#fdfdfd" stroke="#d4d4d4" stroke-width="1" rx="4" />
<line x1="823.5" y1="457.5" x2="924.5" y2="457.5" stroke="#c4c4c4" stroke-width="1" />
<text transform="translate(874.35,449.5) scale(0.93,1)" font-size="12.5" fill="#1b1b1b" text-anchor="middle" stroke="#1b1b1b" stroke-width="0.15">Down</text>
<rect x="820.5" y="468.5" width="107" height="40" fill="#fdfdfd" stroke="#d4d4d4" stroke-width="1" rx="4" />
<line x1="823.5" y1="508.5" x2="924.5" y2="508.5" stroke="#c4c4c4" stroke-width="1" />
<text transform="translate(874.35,485) scale(0.94,1)" font-size="12" fill="#1b1b1b" text-anchor="middle" stroke="#1b1b1b" stroke-width="0.15">Main measure</text>
<text transform="translate(874.35,498) scale(0.94,1)" font-size="12" fill="#1b1b1b" text-anchor="middle" stroke="#1b1b1b" stroke-width="0.15">area</text>
<rect x="563.5" y="651.5" width="362" height="150.5" fill="none" stroke="#dcdcdc" stroke-width="1" rx="1" />
<rect x="571" y="645" width="52" height="12" fill="#f9f9f9" />
<text transform="translate(574.8,657) scale(0.94,1)" font-size="14.3" fill="#1a1a1a" stroke="#1a1a1a" stroke-width="0.15">Display</text>
<rect x="582.7" y="669.2" width="16" height="16" fill="#0063b1" rx="3.5" />
<path d="M586.9,677.5 L589.5,680 L594.5,674.8" stroke="#ffffff" fill="none" stroke-width="1.2" stroke-linecap="round" stroke-linejoin="round"/>
<text transform="translate(604,682.3) scale(0.94,1)" font-size="14.3" fill="#1a1a1a" stroke="#1a1a1a" stroke-width="0.15">Font size</text>
<rect x="794.5" y="664.5" width="78" height="24" fill="#ffffff" stroke="#bdbdbd" stroke-width="1" />
<rect x="795.5" y="665.5" width="76" height="22" fill="none" stroke="#e4e4e4" stroke-width="1" />
<rect x="852.5" y="666.5" width="16" height="9" fill="#f0f0f0" stroke="#d6d6d6" stroke-width="1" />
<rect x="852.5" y="676.5" width="16" height="9" fill="#f0f0f0" stroke="#d6d6d6" stroke-width="1" />
<path d="M857.1,673.6 L860.9,669.6 L864.7,673.6 Z" stroke="none" fill="#000000" stroke-width="1" />
<path d="M857.1,679.4 L860.9,683.4 L864.7,679.4 Z" stroke="none" fill="#000000" stroke-width="1" />
<text transform="translate(796.7,680.4) scale(0.94,1)" font-size="14.3" fill="#000" stroke="#000" stroke-width="0.15">25</text>
<text transform="translate(884,682) scale(0.94,1)" font-size="14.3" fill="#1a1a1a" stroke="#1a1a1a" stroke-width="0.15">px</text>
<rect x="582.7" y="694" width="16" height="16" fill="#0063b1" rx="3.5" />
<path d="M586.9,702.3 L589.5,704.8 L594.5,699.6" stroke="#ffffff" fill="none" stroke-width="1.2" stroke-linecap="round" stroke-linejoin="round"/>
<text transform="translate(604,707) scale(0.94,1)" font-size="14.3" fill="#1a1a1a" stroke="#1a1a1a" stroke-width="0.15">Show in image</text>
<rect x="583.3" y="719.35" width="14.8" height="14.8" fill="#f3f3f3" stroke="#777777" stroke-width="1.2" rx="3.2" />
<text x="604" y="731.5" font-size="14.3" fill="#1a1a1a" textLength="245" lengthAdjust="spacingAndGlyphs" stroke="#1a1a1a" stroke-width="0.15">Visualize excluded range (hot/cold spot)</text>
<rect x="582.7" y="742" width="16" height="16" fill="#0063b1" rx="3.5" />
<path d="M586.9,750.3 L589.5,752.8 L594.5,747.6" stroke="#ffffff" fill="none" stroke-width="1.2" stroke-linecap="round" stroke-linejoin="round"/>
<text x="604" y="755" font-size="14.3" fill="#1a1a1a" textLength="272.7" lengthAdjust="spacingAndGlyphs" stroke="#1a1a1a" stroke-width="0.15">Stagger measure areas in single-line formats</text>
<rect x="938.5" y="260.5" width="414" height="523.5" fill="none" stroke="#dcdcdc" stroke-width="1" rx="1" />
<rect x="944" y="252" width="84" height="14" fill="#f9f9f9" />
<text transform="translate(948,264.6) scale(0.94,1)" font-size="14.3" fill="#1a1a1a" stroke="#1a1a1a" stroke-width="0.15">Measure area</text>
<rect x="1200.5" y="269.5" width="145" height="30" fill="none" stroke="#dcdcdc" stroke-width="1" />
<rect x="1208" y="262" width="90" height="10" fill="#f9f9f9" />
<text transform="translate(1212.7,274.5) scale(0.94,1)" font-size="14.3" fill="#1a1a1a" stroke="#1a1a1a" stroke-width="0.15">Label in image:</text>
<text transform="translate(947.6,288) scale(0.94,1)" font-size="14.3" fill="#1a1a1a" stroke="#1a1a1a" stroke-width="0.15">Name:</text>
<rect x="1016.5" y="270.5" width="170" height="24" fill="#ffffff" stroke="#e2e2e2" stroke-width="1" rx="2" />
<line x1="1016.5" y1="294.5" x2="1186" y2="294.5" stroke="#8a8a8a" stroke-width="1.2" />
<text transform="translate(1018.8,286.8) scale(0.94,1)" font-size="14.3" fill="#000" stroke="#000" stroke-width="0.15">Area 1</text>
<text transform="translate(947.6,315.8) scale(0.94,1)" font-size="14.3" fill="#1a1a1a" stroke="#1a1a1a" stroke-width="0.15">Shape:</text>
<rect x="1016.5" y="298.5" width="170" height="25" fill="#ffffff" stroke="#858585" stroke-width="1" rx="2.5" />
<text transform="translate(1019.7,316.1) scale(0.94,1)" font-size="14.3" fill="#000" stroke="#000" stroke-width="0.15">Ellipse</text>
<path d="M1169.5,308.9 L1174,313.4 L1178.5,308.9" stroke="#404040" fill="none" stroke-width="1.1" />
<text transform="translate(947.6,343) scale(0.94,1)" font-size="14.3" fill="#1a1a1a" stroke="#1a1a1a" stroke-width="0.15">Mode:</text>
<rect x="1016.5" y="328.5" width="170" height="24" fill="#ffffff" stroke="#858585" stroke-width="1" rx="2.5" />
<text transform="translate(1019.7,345.2) scale(0.94,1)" font-size="14.3" fill="#000" stroke="#000" stroke-width="0.15">Mean value</text>
<path d="M1169.5,338 L1174,342.5 L1178.5,338" stroke="#404040" fill="none" stroke-width="1.1" />
<rect x="952.6" y="382.9" width="14.8" height="14.8" fill="#f3f3f3" stroke="#777777" stroke-width="1.2" rx="3.2" />
<text transform="translate(973.5,394.6) scale(0.94,1)" font-size="14.3" fill="#1a1a1a" stroke="#1a1a1a" stroke-width="0.15">Bind to temperature profile</text>
<rect x="952.6" y="409.6" width="14.8" height="14.8" fill="#f3f3f3" stroke="#777777" stroke-width="1.2" rx="3.2" />
<text transform="translate(973.5,421) scale(0.94,1)" font-size="14.3" fill="#1a1a1a" stroke="#1a1a1a" stroke-width="0.15">Emissivity:</text>
<rect x="1054.5" y="406.5" width="70" height="23" fill="#f0f0f0" stroke="#c8c8c8" stroke-width="1" />
<text transform="translate(1057.5,422.5) scale(0.94,1)" font-size="14.3" fill="#7a7a7a" stroke="#7a7a7a" stroke-width="0.15">1,000</text>
<rect x="952" y="437" width="16" height="16" fill="#0063b1" rx="3.5" />
<path d="M956.2,445.3 L958.8,447.8 L963.8,442.6" stroke="#ffffff" fill="none" stroke-width="1.2" stroke-linecap="round" stroke-linejoin="round"/>
<text transform="translate(973.5,449.5) scale(0.94,1)" font-size="14.3" fill="#1a1a1a" stroke="#1a1a1a" stroke-width="0.15">Show in digital display</text>
<rect x="952.6" y="465.2" width="14.8" height="14.8" fill="#f3f3f3" stroke="#777777" stroke-width="1.2" rx="3.2" />
<text x="973.5" y="477" font-size="14.3" fill="#1a1a1a" textLength="126.3" lengthAdjust="spacingAndGlyphs" stroke="#1a1a1a" stroke-width="0.15">Use in event grabber</text>
<rect x="952.6" y="492.3" width="14.8" height="14.8" fill="#f3f3f3" stroke="#777777" stroke-width="1.2" rx="3.2" />
<text transform="translate(973.5,503.5) scale(0.94,1)" font-size="14.3" fill="#1a1a1a" stroke="#1a1a1a" stroke-width="0.15">Include in</text>
<rect x="952.6" y="514.2" width="14.8" height="14.8" fill="#f3f3f3" stroke="#777777" stroke-width="1.2" rx="3.2" />
<text transform="translate(973.5,526) scale(0.94,1)" font-size="14.3" fill="#1a1a1a" stroke="#1a1a1a" stroke-width="0.15">Exclude from</text>
<text transform="translate(1064.8,512.7) scale(0.94,1)" font-size="14.3" fill="#1a1a1a" stroke="#1a1a1a" stroke-width="0.15">hot/cold spot</text>
<rect x="943.5" y="595.5" width="400" height="185" fill="none" stroke="#dcdcdc" stroke-width="1" rx="1" />
<rect x="950" y="588" width="52" height="12" fill="#f9f9f9" />
<text transform="translate(954.8,601) scale(0.94,1)" font-size="14.3" fill="#1a1a1a" stroke="#1a1a1a" stroke-width="0.15">Position</text>
<text transform="translate(954.8,620.6) scale(0.94,1)" font-size="14.3" fill="#1a1a1a" stroke="#1a1a1a" stroke-width="0.15">Location:</text>
<text transform="translate(954.8,636.7) scale(0.94,1)" font-size="14.3" fill="#1a1a1a" stroke="#1a1a1a" stroke-width="0.15">(Center)</text>
<text transform="translate(1042.2,621.7) scale(0.94,1)" font-size="14.3" fill="#1a1a1a" stroke="#1a1a1a" stroke-width="0.15">X:</text>
<text transform="translate(1042.2,653.9) scale(0.94,1)" font-size="14.3" fill="#1a1a1a" stroke="#1a1a1a" stroke-width="0.15">Y:</text>
<text transform="translate(954,688.4) scale(0.94,1)" font-size="14.3" fill="#1a1a1a" stroke="#1a1a1a" stroke-width="0.15">Size:</text>
<text transform="translate(1036.2,688.4) scale(0.94,1)" font-size="14.3" fill="#1a1a1a" stroke="#1a1a1a" stroke-width="0.15">Width:</text>
<text transform="translate(1033,720.6) scale(0.94,1)" font-size="14.3" fill="#1a1a1a" stroke="#1a1a1a" stroke-width="0.15">Height:</text>
<rect x="1095.5" y="604.5" width="60" height="23" fill="#ffffff" stroke="#c4c4c4" stroke-width="1" />
<text transform="translate(1097.5,620.5) scale(0.94,1)" font-size="14.3" fill="#000" stroke="#000" stroke-width="0.15">9</text>
<rect x="1095.5" y="636.7" width="60" height="23.5" fill="#ffffff" stroke="#c4c4c4" stroke-width="1" />
<text transform="translate(1097.5,653.2) scale(0.94,1)" font-size="14.3" fill="#000" stroke="#000" stroke-width="0.15">1</text>
<rect x="1095.5" y="671.2" width="60" height="23.4" fill="#ffffff" stroke="#c4c4c4" stroke-width="1" />
<text transform="translate(1097.5,687.6) scale(0.94,1)" font-size="14.3" fill="#000" stroke="#000" stroke-width="0.15">1</text>
<rect x="1095.5" y="703.4" width="60" height="23.4" fill="#ffffff" stroke="#c4c4c4" stroke-width="1" />
<text transform="translate(1097.5,719.8) scale(0.94,1)" font-size="14.3" fill="#000" stroke="#000" stroke-width="0.15">1</text>
<rect x="957.5" y="744.5" width="173" height="25" fill="#fdfdfd" stroke="#d4d4d4" stroke-width="1" rx="4" />
<line x1="960.5" y1="769.5" x2="1127.5" y2="769.5" stroke="#c4c4c4" stroke-width="1" />
<text transform="translate(1043.55,762) scale(0.94,1)" font-size="14.3" fill="#1b1b1b" text-anchor="middle" stroke="#1b1b1b" stroke-width="0.15">Center</text>
<rect x="1105" y="280" width="815" height="724" fill="#000" opacity="0.6" filter="url(#sh)"/>
<rect x="1105" y="275" width="815" height="2" fill="#fbfbfb" />
<g transform="translate(1105,276)">
<rect x="0" y="0" width="815" height="724" fill="#f0f0f0" />
<rect x="0.5" y="0.5" width="814" height="723" fill="none" stroke="#fafafa" stroke-width="1" />
<rect x="0" y="0" width="815" height="37" fill="#f2f3f5" />
<text transform="translate(8.5,21.2) scale(0.95,1)" font-size="15.7" fill="#1a1a1a" stroke="#1a1a1a" stroke-width="0.15">Configuration</text>
<path d="M792.7,8.7 L805.3,21.3 M805.3,8.7 L792.7,21.3" stroke="#1f1f1f" fill="none" stroke-width="1.1" />
<rect x="2.5" y="104.5" width="806" height="571" fill="#f9f9f9" stroke="#e8e8e8" stroke-width="1" />
<rect x="2.5" y="38.5" width="188" height="22" fill="#f3f3f3" stroke="#e4e4e4" stroke-width="1" />
<text transform="translate(96,54) scale(0.94,1)" font-size="14" fill="#1a1a1a" text-anchor="middle" stroke="#1a1a1a" stroke-width="0.15">Snapshots / Copy to clipboard</text>
<rect x="190.5" y="38.5" width="180" height="22" fill="#f3f3f3" stroke="#e4e4e4" stroke-width="1" />
<text transform="translate(280.25,54) scale(0.94,1)" font-size="14" fill="#1a1a1a" text-anchor="middle" stroke="#1a1a1a" stroke-width="0.15">Trig. Recording / Snapshots</text>
<rect x="370.5" y="38.5" width="106" height="22" fill="#f3f3f3" stroke="#e4e4e4" stroke-width="1" />
<text transform="translate(423.75,54) scale(0.94,1)" font-size="14" fill="#1a1a1a" text-anchor="middle" stroke="#1a1a1a" stroke-width="0.15">Capture Screen</text>
<rect x="477.5" y="38.5" width="72" height="22" fill="#f3f3f3" stroke="#e4e4e4" stroke-width="1" />
<text transform="translate(513.25,54) scale(0.94,1)" font-size="14" fill="#1a1a1a" text-anchor="middle" stroke="#1a1a1a" stroke-width="0.15">Histogram</text>
<rect x="549.5" y="38.5" width="134" height="22" fill="#f3f3f3" stroke="#e4e4e4" stroke-width="1" />
<text transform="translate(616.25,54) scale(0.94,1)" font-size="14" fill="#1a1a1a" text-anchor="middle" stroke="#1a1a1a" stroke-width="0.15">Extended measuring</text>
<rect x="683.5" y="38.5" width="114" height="22" fill="#f3f3f3" stroke="#e4e4e4" stroke-width="1" />
<text transform="translate(740,54) scale(0.94,1)" font-size="14" fill="#1a1a1a" text-anchor="middle" stroke="#1a1a1a" stroke-width="0.15">Measuring colors</text>
<rect x="2.5" y="60.5" width="57" height="22" fill="#f3f3f3" stroke="#e4e4e4" stroke-width="1" />
<text transform="translate(30.7,76) scale(0.94,1)" font-size="14" fill="#1a1a1a" text-anchor="middle" stroke="#1a1a1a" stroke-width="0.15">General</text>
<rect x="59.5" y="60.5" width="102" height="22" fill="#f3f3f3" stroke="#e4e4e4" stroke-width="1" />
<text transform="translate(110.2,76) scale(0.94,1)" font-size="14" fill="#1a1a1a" text-anchor="middle" stroke="#1a1a1a" stroke-width="0.15">Measure areas</text>
<rect x="161.5" y="60.5" width="96" height="22" fill="#f3f3f3" stroke="#e4e4e4" stroke-width="1" />
<text transform="translate(209,76) scale(0.94,1)" font-size="14" fill="#1a1a1a" text-anchor="middle" stroke="#1a1a1a" stroke-width="0.15">Temp. profiles</text>
<rect x="257.5" y="60.5" width="133" height="22" fill="#f3f3f3" stroke="#e4e4e4" stroke-width="1" />
<text transform="translate(323.35,76) scale(0.94,1)" font-size="14" fill="#1a1a1a" text-anchor="middle" stroke="#1a1a1a" stroke-width="0.15">Temp/Time diagram</text>
<rect x="389.5" y="60.5" width="55" height="22" fill="#f3f3f3" stroke="#e4e4e4" stroke-width="1" />
<text transform="translate(417.35,76) scale(0.94,1)" font-size="14" fill="#1a1a1a" text-anchor="middle" stroke="#1a1a1a" stroke-width="0.15">Device</text>
<rect x="445.5" y="60.5" width="91" height="22" fill="#f3f3f3" stroke="#e4e4e4" stroke-width="1" />
<text transform="translate(490.5,76) scale(0.94,1)" font-size="14" fill="#1a1a1a" text-anchor="middle" stroke="#1a1a1a" stroke-width="0.15">Device (PIF)</text>
<rect x="536.5" y="60.5" width="85" height="22" fill="#f3f3f3" stroke="#e4e4e4" stroke-width="1" />
<text transform="translate(578.5,76) scale(0.94,1)" font-size="14" fill="#1a1a1a" text-anchor="middle" stroke="#1a1a1a" stroke-width="0.15">Referencing</text>
<rect x="621.5" y="60.5" width="74" height="22" fill="#f3f3f3" stroke="#e4e4e4" stroke-width="1" />
<text transform="translate(658,76) scale(0.94,1)" font-size="14" fill="#1a1a1a" text-anchor="middle" stroke="#1a1a1a" stroke-width="0.15">Recording</text>
<rect x="695.5" y="60.5" width="57" height="22" fill="#f3f3f3" stroke="#e4e4e4" stroke-width="1" />
<text transform="translate(723.5,76) scale(0.94,1)" font-size="14" fill="#1a1a1a" text-anchor="middle" stroke="#1a1a1a" stroke-width="0.15">Playing</text>
<rect x="2.5" y="82.5" width="123" height="22" fill="#f3f3f3" stroke="#e4e4e4" stroke-width="1" />
<text transform="translate(63.5,98) scale(0.94,1)" font-size="14" fill="#1a1a1a" text-anchor="middle" stroke="#1a1a1a" stroke-width="0.15">IR Image arranging</text>
<rect x="177.5" y="82.5" width="98" height="22" fill="#f3f3f3" stroke="#e4e4e4" stroke-width="1" />
<text transform="translate(226.25,98) scale(0.94,1)" font-size="14" fill="#1a1a1a" text-anchor="middle" stroke="#1a1a1a" stroke-width="0.15">Event grabber</text>
<rect x="275.5" y="82.5" width="154" height="22" fill="#f3f3f3" stroke="#e4e4e4" stroke-width="1" />
<text transform="translate(352.75,98) scale(0.94,1)" font-size="14" fill="#1a1a1a" text-anchor="middle" stroke="#1a1a1a" stroke-width="0.15">External Communication</text>
<rect x="430.5" y="82.5" width="109" height="22" fill="#f3f3f3" stroke="#e4e4e4" stroke-width="1" />
<text transform="translate(484.5,98) scale(0.94,1)" font-size="14" fill="#1a1a1a" text-anchor="middle" stroke="#1a1a1a" stroke-width="0.15">Extended Layout</text>
<rect x="123.5" y="80.5" width="56" height="25" fill="#f9f9f9" stroke="#e0e0e0" stroke-width="1" />
<rect x="124" y="103" width="55" height="4" fill="#f9f9f9" />
<text transform="translate(151,96) scale(0.94,1)" font-size="14" fill="#1a1a1a" text-anchor="middle" stroke="#1a1a1a" stroke-width="0.15">Alarms</text>
<rect x="24.8" y="692" width="16" height="16" fill="#0063b1" rx="3.5" />
<path d="M29,700.3 L31.6,702.8 L36.6,697.6" stroke="#ffffff" fill="none" stroke-width="1.2" stroke-linecap="round" stroke-linejoin="round"/>
<text transform="translate(45.8,705) scale(0.94,1)" font-size="14.3" fill="#1a1a1a" stroke="#1a1a1a" stroke-width="0.15">Auto apply</text>
<rect x="347.5" y="687.5" width="108" height="25" fill="#fdfdfd" stroke="#d4d4d4" stroke-width="1" rx="4" />
<line x1="350.5" y1="712.5" x2="452.5" y2="712.5" stroke="#c4c4c4" stroke-width="1" />
<text transform="translate(401,705) scale(0.94,1)" font-size="14.3" fill="#1b1b1b" text-anchor="middle" stroke="#1b1b1b" stroke-width="0.15">OK</text>
<rect x="466.5" y="687.5" width="108" height="25" fill="#fdfdfd" stroke="#d4d4d4" stroke-width="1" rx="4" />
<line x1="469.5" y1="712.5" x2="571.5" y2="712.5" stroke="#c4c4c4" stroke-width="1" />
<text transform="translate(519.85,705) scale(0.94,1)" font-size="14.3" fill="#1b1b1b" text-anchor="middle" stroke="#1b1b1b" stroke-width="0.15">Apply</text>
<rect x="585.5" y="687.5" width="108" height="25" fill="#fdfdfd" stroke="#d4d4d4" stroke-width="1" rx="4" />
<line x1="588.5" y1="712.5" x2="690.5" y2="712.5" stroke="#c4c4c4" stroke-width="1" />
<text transform="translate(639.45,705) scale(0.94,1)" font-size="14.3" fill="#1b1b1b" text-anchor="middle" stroke="#1b1b1b" stroke-width="0.15">Cancel</text>
</g>
<text transform="translate(1140,416.7) scale(0.96,1)" font-size="14" fill="#1a1a1a" stroke="#1a1a1a" stroke-width="0.15">Measure area</text>
<text transform="translate(1243.7,416.7) scale(0.96,1)" font-size="14" fill="#1a1a1a" stroke="#1a1a1a" stroke-width="0.15">Display ranges</text>
<text transform="translate(1436.7,416.7) scale(0.96,1)" font-size="14" fill="#1a1a1a" stroke="#1a1a1a" stroke-width="0.15">Pre-alarms</text>
<text transform="translate(1599.2,416.7) scale(0.96,1)" font-size="14" fill="#1a1a1a" stroke="#1a1a1a" stroke-width="0.15">Alarms</text>
<text transform="translate(1690.6,416.7) scale(0.96,1)" font-size="14" fill="#1a1a1a" stroke="#1a1a1a" stroke-width="0.15">GraphBar</text>
<text transform="translate(1803.75,416.7) scale(0.96,1)" font-size="14" fill="#1a1a1a" stroke="#1a1a1a" stroke-width="0.15">Alarm</text>
<text transform="translate(1243.7,435) scale(0.96,1)" font-size="14" fill="#1a1a1a" stroke="#1a1a1a" stroke-width="0.15">Min.</text>
<text transform="translate(1311.7,435) scale(0.96,1)" font-size="14" fill="#1a1a1a" stroke="#1a1a1a" stroke-width="0.15">Max.</text>
<text transform="translate(1418,435) scale(0.96,1)" font-size="14" fill="#1a1a1a" stroke="#1a1a1a" stroke-width="0.15">Low</text>
<text transform="translate(1485.8,435) scale(0.96,1)" font-size="14" fill="#1a1a1a" stroke="#1a1a1a" stroke-width="0.15">High</text>
<text transform="translate(1567.5,435) scale(0.96,1)" font-size="14" fill="#1a1a1a" stroke="#1a1a1a" stroke-width="0.15">Low</text>
<text transform="translate(1635.3,435) scale(0.96,1)" font-size="14" fill="#1a1a1a" stroke="#1a1a1a" stroke-width="0.15">High</text>
<text transform="translate(1771.9,435) scale(0.96,1)" font-size="14" fill="#1a1a1a" stroke="#1a1a1a" stroke-width="0.15">Appl.</text>
<text transform="translate(1820,435) scale(0.96,1)" font-size="14" fill="#1a1a1a" stroke="#1a1a1a" stroke-width="0.15">to PIF</text>
<line x1="1115" y1="442.5" x2="1896" y2="442.5" stroke="#a0a0a0" stroke-width="1" />
<line x1="1115" y1="443.5" x2="1896" y2="443.5" stroke="#ffffff" stroke-width="1" />
<text transform="translate(1232.5,460.2) scale(0.91,1)" font-size="15" fill="#000" text-anchor="end" font-weight="bold" stroke="#000" stroke-width="0.2">Area 1</text>
<rect x="1242.5" y="445.5" width="60" height="24" fill="#ffffff" stroke="#bdbdbd" stroke-width="1" />
<rect x="1243.5" y="446.5" width="58" height="22" fill="none" stroke="#e4e4e4" stroke-width="1" />
<rect x="1282.5" y="447.5" width="16" height="9" fill="#f0f0f0" stroke="#d6d6d6" stroke-width="1" />
<rect x="1282.5" y="457.5" width="16" height="9" fill="#f0f0f0" stroke="#d6d6d6" stroke-width="1" />
<path d="M1287.3,454.9 L1291.1,450.9 L1294.9,454.9 Z" stroke="none" fill="#000000" stroke-width="1" />
<path d="M1287.3,460.7 L1291.1,464.7 L1294.9,460.7 Z" stroke="none" fill="#000000" stroke-width="1" />
<text transform="translate(1244.8,461.7) scale(0.81,1)" font-size="16" fill="#000" stroke="#000" stroke-width="0.15">0,0</text>
<rect x="1310.5" y="445.5" width="60" height="24" fill="#ffffff" stroke="#bdbdbd" stroke-width="1" />
<rect x="1311.5" y="446.5" width="58" height="22" fill="none" stroke="#e4e4e4" stroke-width="1" />
<rect x="1350.5" y="447.5" width="16" height="9" fill="#f0f0f0" stroke="#d6d6d6" stroke-width="1" />
<rect x="1350.5" y="457.5" width="16" height="9" fill="#f0f0f0" stroke="#d6d6d6" stroke-width="1" />
<path d="M1355.1,454.9 L1358.9,450.9 L1362.7,454.9 Z" stroke="none" fill="#000000" stroke-width="1" />
<path d="M1355.1,460.7 L1358.9,464.7 L1362.7,460.7 Z" stroke="none" fill="#000000" stroke-width="1" />
<text transform="translate(1312.6,461.7) scale(0.81,1)" font-size="16" fill="#000" stroke="#000" stroke-width="0.15">200,0</text>
<rect x="1390.9" y="448.1" width="14.8" height="14.8" fill="#f3f3f3" stroke="#777777" stroke-width="1.2" rx="3.2" />
<rect x="1415.5" y="445.5" width="60" height="24" fill="#f0f0f0" stroke="#bdbdbd" stroke-width="1" />
<rect x="1416.5" y="446.5" width="58" height="22" fill="none" stroke="#e4e4e4" stroke-width="1" />
<rect x="1455.5" y="447.5" width="16" height="9" fill="#f0f0f0" stroke="#d6d6d6" stroke-width="1" />
<rect x="1455.5" y="457.5" width="16" height="9" fill="#f0f0f0" stroke="#d6d6d6" stroke-width="1" />
<path d="M1460.1,454.9 L1463.9,450.9 L1467.7,454.9 Z" stroke="none" fill="#555555" stroke-width="1" />
<path d="M1460.1,460.7 L1463.9,464.7 L1467.7,460.7 Z" stroke="none" fill="#555555" stroke-width="1" />
<text transform="translate(1417.6,461.7) scale(0.81,1)" font-size="16" fill="#6d6d6d" stroke="#6d6d6d" stroke-width="0.15">24,0</text>
<rect x="1483.5" y="445.5" width="60" height="24" fill="#f0f0f0" stroke="#bdbdbd" stroke-width="1" />
<rect x="1484.5" y="446.5" width="58" height="22" fill="none" stroke="#e4e4e4" stroke-width="1" />
<rect x="1523.5" y="447.5" width="16" height="9" fill="#f0f0f0" stroke="#d6d6d6" stroke-width="1" />
<rect x="1523.5" y="457.5" width="16" height="9" fill="#f0f0f0" stroke="#d6d6d6" stroke-width="1" />
<path d="M1528.1,454.9 L1531.9,450.9 L1535.7,454.9 Z" stroke="none" fill="#555555" stroke-width="1" />
<path d="M1528.1,460.7 L1531.9,464.7 L1535.7,460.7 Z" stroke="none" fill="#555555" stroke-width="1" />
<text transform="translate(1485.6,461.7) scale(0.81,1)" font-size="16" fill="#6d6d6d" stroke="#6d6d6d" stroke-width="0.15">36,0</text>
<rect x="1563.5" y="445.5" width="60" height="24" fill="#ffffff" stroke="#bdbdbd" stroke-width="1" />
<rect x="1564.5" y="446.5" width="58" height="22" fill="none" stroke="#e4e4e4" stroke-width="1" />
<rect x="1603.5" y="447.5" width="16" height="9" fill="#f0f0f0" stroke="#d6d6d6" stroke-width="1" />
<rect x="1603.5" y="457.5" width="16" height="9" fill="#f0f0f0" stroke="#d6d6d6" stroke-width="1" />
<path d="M1608.1,454.9 L1611.9,450.9 L1615.7,454.9 Z" stroke="none" fill="#000000" stroke-width="1" />
<path d="M1608.1,460.7 L1611.9,464.7 L1615.7,460.7 Z" stroke="none" fill="#000000" stroke-width="1" />
<text transform="translate(1565.6,461.7) scale(0.81,1)" font-size="16" fill="#000" stroke="#000" stroke-width="0.15">20,0</text>
<rect x="1631.5" y="445.5" width="60" height="24" fill="#ffffff" stroke="#bdbdbd" stroke-width="1" />
<rect x="1632.5" y="446.5" width="58" height="22" fill="none" stroke="#e4e4e4" stroke-width="1" />
<rect x="1671.5" y="447.5" width="16" height="9" fill="#f0f0f0" stroke="#d6d6d6" stroke-width="1" />
<rect x="1671.5" y="457.5" width="16" height="9" fill="#f0f0f0" stroke="#d6d6d6" stroke-width="1" />
<path d="M1676.3,454.9 L1680.1,450.9 L1683.9,454.9 Z" stroke="none" fill="#000000" stroke-width="1" />
<path d="M1676.3,460.7 L1680.1,464.7 L1683.9,460.7 Z" stroke="none" fill="#000000" stroke-width="1" />
<text transform="translate(1633.8,461.7) scale(0.81,1)" font-size="16" fill="#000" stroke="#000" stroke-width="0.15">200,0</text>
<rect x="1711.3" y="446.9" width="16" height="16" fill="#0063b1" rx="3.5" />
<path d="M1715.5,455.2 L1718.1,457.7 L1723.1,452.5" stroke="#ffffff" fill="none" stroke-width="1.2" stroke-linecap="round" stroke-linejoin="round"/>
<rect x="1763.6" y="447.5" width="14.8" height="14.8" fill="#f3f3f3" stroke="#777777" stroke-width="1.2" rx="3.2" />
<line x1="1804.5" y1="442" x2="1804.5" y2="469.5" stroke="#a8a8a8" stroke-width="1" />
<line x1="1804.4" y1="441.5" x2="1876" y2="441.5" stroke="#a8a8a8" stroke-width="1" />
<text transform="translate(1232.5,487.41) scale(0.91,1)" font-size="15" fill="#222" text-anchor="end" stroke="#222" stroke-width="0.05">Area 2</text>
<rect x="1242.5" y="472.5" width="60" height="24" fill="#ffffff" stroke="#bdbdbd" stroke-width="1" />
<rect x="1243.5" y="473.5" width="58" height="22" fill="none" stroke="#e4e4e4" stroke-width="1" />
<rect x="1282.5" y="475.5" width="16" height="9" fill="#f0f0f0" stroke="#d6d6d6" stroke-width="1" />
<rect x="1282.5" y="484.5" width="16" height="9" fill="#f0f0f0" stroke="#d6d6d6" stroke-width="1" />
<path d="M1287.3,482.11 L1291.1,478.11 L1294.9,482.11 Z" stroke="none" fill="#000000" stroke-width="1" />
<path d="M1287.3,487.91 L1291.1,491.91 L1294.9,487.91 Z" stroke="none" fill="#000000" stroke-width="1" />
<text transform="translate(1244.8,488.91) scale(0.81,1)" font-size="16" fill="#000" stroke="#000" stroke-width="0.15">0,0</text>
<rect x="1310.5" y="472.5" width="60" height="24" fill="#ffffff" stroke="#bdbdbd" stroke-width="1" />
<rect x="1311.5" y="473.5" width="58" height="22" fill="none" stroke="#e4e4e4" stroke-width="1" />
<rect x="1350.5" y="475.5" width="16" height="9" fill="#f0f0f0" stroke="#d6d6d6" stroke-width="1" />
<rect x="1350.5" y="484.5" width="16" height="9" fill="#f0f0f0" stroke="#d6d6d6" stroke-width="1" />
<path d="M1355.1,482.11 L1358.9,478.11 L1362.7,482.11 Z" stroke="none" fill="#000000" stroke-width="1" />
<path d="M1355.1,487.91 L1358.9,491.91 L1362.7,487.91 Z" stroke="none" fill="#000000" stroke-width="1" />
<text transform="translate(1312.6,488.91) scale(0.81,1)" font-size="16" fill="#000" stroke="#000" stroke-width="0.15">200,0</text>
<rect x="1390.9" y="475.31" width="14.8" height="14.8" fill="#f3f3f3" stroke="#777777" stroke-width="1.2" rx="3.2" />
<rect x="1415.5" y="472.5" width="60" height="24" fill="#f0f0f0" stroke="#bdbdbd" stroke-width="1" />
<rect x="1416.5" y="473.5" width="58" height="22" fill="none" stroke="#e4e4e4" stroke-width="1" />
<rect x="1455.5" y="475.5" width="16" height="9" fill="#f0f0f0" stroke="#d6d6d6" stroke-width="1" />
<rect x="1455.5" y="484.5" width="16" height="9" fill="#f0f0f0" stroke="#d6d6d6" stroke-width="1" />
<path d="M1460.1,482.11 L1463.9,478.11 L1467.7,482.11 Z" stroke="none" fill="#555555" stroke-width="1" />
<path d="M1460.1,487.91 L1463.9,491.91 L1467.7,487.91 Z" stroke="none" fill="#555555" stroke-width="1" />
<text transform="translate(1417.6,488.91) scale(0.81,1)" font-size="16" fill="#6d6d6d" stroke="#6d6d6d" stroke-width="0.15">24,0</text>
<rect x="1483.5" y="472.5" width="60" height="24" fill="#f0f0f0" stroke="#bdbdbd" stroke-width="1" />
<rect x="1484.5" y="473.5" width="58" height="22" fill="none" stroke="#e4e4e4" stroke-width="1" />
<rect x="1523.5" y="475.5" width="16" height="9" fill="#f0f0f0" stroke="#d6d6d6" stroke-width="1" />
<rect x="1523.5" y="484.5" width="16" height="9" fill="#f0f0f0" stroke="#d6d6d6" stroke-width="1" />
<path d="M1528.1,482.11 L1531.9,478.11 L1535.7,482.11 Z" stroke="none" fill="#555555" stroke-width="1" />
<path d="M1528.1,487.91 L1531.9,491.91 L1535.7,487.91 Z" stroke="none" fill="#555555" stroke-width="1" />
<text transform="translate(1485.6,488.91) scale(0.81,1)" font-size="16" fill="#6d6d6d" stroke="#6d6d6d" stroke-width="0.15">36,0</text>
<rect x="1563.5" y="472.5" width="60" height="24" fill="#ffffff" stroke="#bdbdbd" stroke-width="1" />
<rect x="1564.5" y="473.5" width="58" height="22" fill="none" stroke="#e4e4e4" stroke-width="1" />
<rect x="1603.5" y="475.5" width="16" height="9" fill="#f0f0f0" stroke="#d6d6d6" stroke-width="1" />
<rect x="1603.5" y="484.5" width="16" height="9" fill="#f0f0f0" stroke="#d6d6d6" stroke-width="1" />
<path d="M1608.1,482.11 L1611.9,478.11 L1615.7,482.11 Z" stroke="none" fill="#000000" stroke-width="1" />
<path d="M1608.1,487.91 L1611.9,491.91 L1615.7,487.91 Z" stroke="none" fill="#000000" stroke-width="1" />
<text transform="translate(1565.6,488.91) scale(0.81,1)" font-size="16" fill="#000" stroke="#000" stroke-width="0.15">20,0</text>
<rect x="1631.5" y="472.5" width="60" height="24" fill="#ffffff" stroke="#bdbdbd" stroke-width="1" />
<rect x="1632.5" y="473.5" width="58" height="22" fill="none" stroke="#e4e4e4" stroke-width="1" />
<rect x="1671.5" y="475.5" width="16" height="9" fill="#f0f0f0" stroke="#d6d6d6" stroke-width="1" />
<rect x="1671.5" y="484.5" width="16" height="9" fill="#f0f0f0" stroke="#d6d6d6" stroke-width="1" />
<path d="M1676.3,482.11 L1680.1,478.11 L1683.9,482.11 Z" stroke="none" fill="#000000" stroke-width="1" />
<path d="M1676.3,487.91 L1680.1,491.91 L1683.9,487.91 Z" stroke="none" fill="#000000" stroke-width="1" />
<text transform="translate(1633.8,488.91) scale(0.81,1)" font-size="16" fill="#000" stroke="#000" stroke-width="0.15">200,0</text>
<rect x="1711.3" y="474.11" width="16" height="16" fill="#0063b1" rx="3.5" />
<path d="M1715.5,482.41 L1718.1,484.91 L1723.1,479.71" stroke="#ffffff" fill="none" stroke-width="1.2" stroke-linecap="round" stroke-linejoin="round"/>
<rect x="1763.6" y="474.71" width="14.8" height="14.8" fill="#f3f3f3" stroke="#777777" stroke-width="1.2" rx="3.2" />
<line x1="1804.5" y1="469.21" x2="1804.5" y2="496.71" stroke="#a8a8a8" stroke-width="1" />
<line x1="1804.4" y1="468.5" x2="1876" y2="468.5" stroke="#a8a8a8" stroke-width="1" />
<text transform="translate(1232.5,514.62) scale(0.91,1)" font-size="15" fill="#222" text-anchor="end" stroke="#222" stroke-width="0.05">Area 3</text>
<rect x="1242.5" y="499.5" width="60" height="24" fill="#ffffff" stroke="#bdbdbd" stroke-width="1" />
<rect x="1243.5" y="500.5" width="58" height="22" fill="none" stroke="#e4e4e4" stroke-width="1" />
<rect x="1282.5" y="502.5" width="16" height="9" fill="#f0f0f0" stroke="#d6d6d6" stroke-width="1" />
<rect x="1282.5" y="511.5" width="16" height="9" fill="#f0f0f0" stroke="#d6d6d6" stroke-width="1" />
<path d="M1287.3,509.32 L1291.1,505.32 L1294.9,509.32 Z" stroke="none" fill="#000000" stroke-width="1" />
<path d="M1287.3,515.12 L1291.1,519.12 L1294.9,515.12 Z" stroke="none" fill="#000000" stroke-width="1" />
<text transform="translate(1244.8,516.12) scale(0.81,1)" font-size="16" fill="#000" stroke="#000" stroke-width="0.15">0,0</text>
<rect x="1310.5" y="499.5" width="60" height="24" fill="#ffffff" stroke="#bdbdbd" stroke-width="1" />
<rect x="1311.5" y="500.5" width="58" height="22" fill="none" stroke="#e4e4e4" stroke-width="1" />
<rect x="1350.5" y="502.5" width="16" height="9" fill="#f0f0f0" stroke="#d6d6d6" stroke-width="1" />
<rect x="1350.5" y="511.5" width="16" height="9" fill="#f0f0f0" stroke="#d6d6d6" stroke-width="1" />
<path d="M1355.1,509.32 L1358.9,505.32 L1362.7,509.32 Z" stroke="none" fill="#000000" stroke-width="1" />
<path d="M1355.1,515.12 L1358.9,519.12 L1362.7,515.12 Z" stroke="none" fill="#000000" stroke-width="1" />
<text transform="translate(1312.6,516.12) scale(0.81,1)" font-size="16" fill="#000" stroke="#000" stroke-width="0.15">200,0</text>
<rect x="1390.9" y="502.52" width="14.8" height="14.8" fill="#f3f3f3" stroke="#777777" stroke-width="1.2" rx="3.2" />
<rect x="1415.5" y="499.5" width="60" height="24" fill="#f0f0f0" stroke="#bdbdbd" stroke-width="1" />
<rect x="1416.5" y="500.5" width="58" height="22" fill="none" stroke="#e4e4e4" stroke-width="1" />
<rect x="1455.5" y="502.5" width="16" height="9" fill="#f0f0f0" stroke="#d6d6d6" stroke-width="1" />
<rect x="1455.5" y="511.5" width="16" height="9" fill="#f0f0f0" stroke="#d6d6d6" stroke-width="1" />
<path d="M1460.1,509.32 L1463.9,505.32 L1467.7,509.32 Z" stroke="none" fill="#555555" stroke-width="1" />
<path d="M1460.1,515.12 L1463.9,519.12 L1467.7,515.12 Z" stroke="none" fill="#555555" stroke-width="1" />
<text transform="translate(1417.6,516.12) scale(0.81,1)" font-size="16" fill="#6d6d6d" stroke="#6d6d6d" stroke-width="0.15">24,0</text>
<rect x="1483.5" y="499.5" width="60" height="24" fill="#f0f0f0" stroke="#bdbdbd" stroke-width="1" />
<rect x="1484.5" y="500.5" width="58" height="22" fill="none" stroke="#e4e4e4" stroke-width="1" />
<rect x="1523.5" y="502.5" width="16" height="9" fill="#f0f0f0" stroke="#d6d6d6" stroke-width="1" />
<rect x="1523.5" y="511.5" width="16" height="9" fill="#f0f0f0" stroke="#d6d6d6" stroke-width="1" />
<path d="M1528.1,509.32 L1531.9,505.32 L1535.7,509.32 Z" stroke="none" fill="#555555" stroke-width="1" />
<path d="M1528.1,515.12 L1531.9,519.12 L1535.7,515.12 Z" stroke="none" fill="#555555" stroke-width="1" />
<text transform="translate(1485.6,516.12) scale(0.81,1)" font-size="16" fill="#6d6d6d" stroke="#6d6d6d" stroke-width="0.15">36,0</text>
<rect x="1563.5" y="499.5" width="60" height="24" fill="#ffffff" stroke="#bdbdbd" stroke-width="1" />
<rect x="1564.5" y="500.5" width="58" height="22" fill="none" stroke="#e4e4e4" stroke-width="1" />
<rect x="1603.5" y="502.5" width="16" height="9" fill="#f0f0f0" stroke="#d6d6d6" stroke-width="1" />
<rect x="1603.5" y="511.5" width="16" height="9" fill="#f0f0f0" stroke="#d6d6d6" stroke-width="1" />
<path d="M1608.1,509.32 L1611.9,505.32 L1615.7,509.32 Z" stroke="none" fill="#000000" stroke-width="1" />
<path d="M1608.1,515.12 L1611.9,519.12 L1615.7,515.12 Z" stroke="none" fill="#000000" stroke-width="1" />
<text transform="translate(1565.6,516.12) scale(0.81,1)" font-size="16" fill="#000" stroke="#000" stroke-width="0.15">20,0</text>
<rect x="1631.5" y="499.5" width="60" height="24" fill="#ffffff" stroke="#bdbdbd" stroke-width="1" />
<rect x="1632.5" y="500.5" width="58" height="22" fill="none" stroke="#e4e4e4" stroke-width="1" />
<rect x="1671.5" y="502.5" width="16" height="9" fill="#f0f0f0" stroke="#d6d6d6" stroke-width="1" />
<rect x="1671.5" y="511.5" width="16" height="9" fill="#f0f0f0" stroke="#d6d6d6" stroke-width="1" />
<path d="M1676.3,509.32 L1680.1,505.32 L1683.9,509.32 Z" stroke="none" fill="#000000" stroke-width="1" />
<path d="M1676.3,515.12 L1680.1,519.12 L1683.9,515.12 Z" stroke="none" fill="#000000" stroke-width="1" />
<text transform="translate(1633.8,516.12) scale(0.81,1)" font-size="16" fill="#000" stroke="#000" stroke-width="0.15">200,0</text>
<rect x="1711.3" y="501.32" width="16" height="16" fill="#0063b1" rx="3.5" />
<path d="M1715.5,509.62 L1718.1,512.12 L1723.1,506.92" stroke="#ffffff" fill="none" stroke-width="1.2" stroke-linecap="round" stroke-linejoin="round"/>
<rect x="1763.6" y="501.92" width="14.8" height="14.8" fill="#f3f3f3" stroke="#777777" stroke-width="1.2" rx="3.2" />
<line x1="1804.5" y1="496.42" x2="1804.5" y2="523.92" stroke="#a8a8a8" stroke-width="1" />
<line x1="1804.4" y1="495.5" x2="1876" y2="495.5" stroke="#a8a8a8" stroke-width="1" />
<text transform="translate(1232.5,541.83) scale(0.91,1)" font-size="15" fill="#222" text-anchor="end" stroke="#222" stroke-width="0.05">Area 4</text>
<rect x="1242.5" y="527.5" width="60" height="24" fill="#ffffff" stroke="#bdbdbd" stroke-width="1" />
<rect x="1243.5" y="528.5" width="58" height="22" fill="none" stroke="#e4e4e4" stroke-width="1" />
<rect x="1282.5" y="529.5" width="16" height="9" fill="#f0f0f0" stroke="#d6d6d6" stroke-width="1" />
<rect x="1282.5" y="539.5" width="16" height="9" fill="#f0f0f0" stroke="#d6d6d6" stroke-width="1" />
<path d="M1287.3,536.53 L1291.1,532.53 L1294.9,536.53 Z" stroke="none" fill="#000000" stroke-width="1" />
<path d="M1287.3,542.33 L1291.1,546.33 L1294.9,542.33 Z" stroke="none" fill="#000000" stroke-width="1" />
<text transform="translate(1244.8,543.33) scale(0.81,1)" font-size="16" fill="#000" stroke="#000" stroke-width="0.15">0,0</text>
<rect x="1310.5" y="527.5" width="60" height="24" fill="#ffffff" stroke="#bdbdbd" stroke-width="1" />
<rect x="1311.5" y="528.5" width="58" height="22" fill="none" stroke="#e4e4e4" stroke-width="1" />
<rect x="1350.5" y="529.5" width="16" height="9" fill="#f0f0f0" stroke="#d6d6d6" stroke-width="1" />
<rect x="1350.5" y="539.5" width="16" height="9" fill="#f0f0f0" stroke="#d6d6d6" stroke-width="1" />
<path d="M1355.1,536.53 L1358.9,532.53 L1362.7,536.53 Z" stroke="none" fill="#000000" stroke-width="1" />
<path d="M1355.1,542.33 L1358.9,546.33 L1362.7,542.33 Z" stroke="none" fill="#000000" stroke-width="1" />
<text transform="translate(1312.6,543.33) scale(0.81,1)" font-size="16" fill="#000" stroke="#000" stroke-width="0.15">200,0</text>
<rect x="1390.9" y="529.73" width="14.8" height="14.8" fill="#f3f3f3" stroke="#777777" stroke-width="1.2" rx="3.2" />
<rect x="1415.5" y="527.5" width="60" height="24" fill="#f0f0f0" stroke="#bdbdbd" stroke-width="1" />
<rect x="1416.5" y="528.5" width="58" height="22" fill="none" stroke="#e4e4e4" stroke-width="1" />
<rect x="1455.5" y="529.5" width="16" height="9" fill="#f0f0f0" stroke="#d6d6d6" stroke-width="1" />
<rect x="1455.5" y="539.5" width="16" height="9" fill="#f0f0f0" stroke="#d6d6d6" stroke-width="1" />
<path d="M1460.1,536.53 L1463.9,532.53 L1467.7,536.53 Z" stroke="none" fill="#555555" stroke-width="1" />
<path d="M1460.1,542.33 L1463.9,546.33 L1467.7,542.33 Z" stroke="none" fill="#555555" stroke-width="1" />
<text transform="translate(1417.6,543.33) scale(0.81,1)" font-size="16" fill="#6d6d6d" stroke="#6d6d6d" stroke-width="0.15">24,0</text>
<rect x="1483.5" y="527.5" width="60" height="24" fill="#f0f0f0" stroke="#bdbdbd" stroke-width="1" />
<rect x="1484.5" y="528.5" width="58" height="22" fill="none" stroke="#e4e4e4" stroke-width="1" />
<rect x="1523.5" y="529.5" width="16" height="9" fill="#f0f0f0" stroke="#d6d6d6" stroke-width="1" />
<rect x="1523.5" y="539.5" width="16" height="9" fill="#f0f0f0" stroke="#d6d6d6" stroke-width="1" />
<path d="M1528.1,536.53 L1531.9,532.53 L1535.7,536.53 Z" stroke="none" fill="#555555" stroke-width="1" />
<path d="M1528.1,542.33 L1531.9,546.33 L1535.7,542.33 Z" stroke="none" fill="#555555" stroke-width="1" />
<text transform="translate(1485.6,543.33) scale(0.81,1)" font-size="16" fill="#6d6d6d" stroke="#6d6d6d" stroke-width="0.15">36,0</text>
<rect x="1563.5" y="527.5" width="60" height="24" fill="#ffffff" stroke="#bdbdbd" stroke-width="1" />
<rect x="1564.5" y="528.5" width="58" height="22" fill="none" stroke="#e4e4e4" stroke-width="1" />
<rect x="1603.5" y="529.5" width="16" height="9" fill="#f0f0f0" stroke="#d6d6d6" stroke-width="1" />
<rect x="1603.5" y="539.5" width="16" height="9" fill="#f0f0f0" stroke="#d6d6d6" stroke-width="1" />
<path d="M1608.1,536.53 L1611.9,532.53 L1615.7,536.53 Z" stroke="none" fill="#000000" stroke-width="1" />
<path d="M1608.1,542.33 L1611.9,546.33 L1615.7,542.33 Z" stroke="none" fill="#000000" stroke-width="1" />
<text transform="translate(1565.6,543.33) scale(0.81,1)" font-size="16" fill="#000" stroke="#000" stroke-width="0.15">20,0</text>
<rect x="1631.5" y="527.5" width="60" height="24" fill="#ffffff" stroke="#bdbdbd" stroke-width="1" />
<rect x="1632.5" y="528.5" width="58" height="22" fill="none" stroke="#e4e4e4" stroke-width="1" />
<rect x="1671.5" y="529.5" width="16" height="9" fill="#f0f0f0" stroke="#d6d6d6" stroke-width="1" />
<rect x="1671.5" y="539.5" width="16" height="9" fill="#f0f0f0" stroke="#d6d6d6" stroke-width="1" />
<path d="M1676.3,536.53 L1680.1,532.53 L1683.9,536.53 Z" stroke="none" fill="#000000" stroke-width="1" />
<path d="M1676.3,542.33 L1680.1,546.33 L1683.9,542.33 Z" stroke="none" fill="#000000" stroke-width="1" />
<text transform="translate(1633.8,543.33) scale(0.81,1)" font-size="16" fill="#000" stroke="#000" stroke-width="0.15">200,0</text>
<rect x="1711.3" y="528.53" width="16" height="16" fill="#0063b1" rx="3.5" />
<path d="M1715.5,536.83 L1718.1,539.33 L1723.1,534.13" stroke="#ffffff" fill="none" stroke-width="1.2" stroke-linecap="round" stroke-linejoin="round"/>
<rect x="1763.6" y="529.13" width="14.8" height="14.8" fill="#f3f3f3" stroke="#777777" stroke-width="1.2" rx="3.2" />
<line x1="1804.5" y1="523.63" x2="1804.5" y2="551.13" stroke="#a8a8a8" stroke-width="1" />
<line x1="1804.4" y1="523.5" x2="1876" y2="523.5" stroke="#a8a8a8" stroke-width="1" />
<text transform="translate(1232.5,569.04) scale(0.91,1)" font-size="15" fill="#222" text-anchor="end" stroke="#222" stroke-width="0.05">Area 5</text>
<rect x="1242.5" y="554.5" width="60" height="24" fill="#ffffff" stroke="#bdbdbd" stroke-width="1" />
<rect x="1243.5" y="555.5" width="58" height="22" fill="none" stroke="#e4e4e4" stroke-width="1" />
<rect x="1282.5" y="556.5" width="16" height="9" fill="#f0f0f0" stroke="#d6d6d6" stroke-width="1" />
<rect x="1282.5" y="566.5" width="16" height="9" fill="#f0f0f0" stroke="#d6d6d6" stroke-width="1" />
<path d="M1287.3,563.74 L1291.1,559.74 L1294.9,563.74 Z" stroke="none" fill="#000000" stroke-width="1" />
<path d="M1287.3,569.54 L1291.1,573.54 L1294.9,569.54 Z" stroke="none" fill="#000000" stroke-width="1" />
<text transform="translate(1244.8,570.54) scale(0.81,1)" font-size="16" fill="#000" stroke="#000" stroke-width="0.15">0,0</text>
<rect x="1310.5" y="554.5" width="60" height="24" fill="#ffffff" stroke="#bdbdbd" stroke-width="1" />
<rect x="1311.5" y="555.5" width="58" height="22" fill="none" stroke="#e4e4e4" stroke-width="1" />
<rect x="1350.5" y="556.5" width="16" height="9" fill="#f0f0f0" stroke="#d6d6d6" stroke-width="1" />
<rect x="1350.5" y="566.5" width="16" height="9" fill="#f0f0f0" stroke="#d6d6d6" stroke-width="1" />
<path d="M1355.1,563.74 L1358.9,559.74 L1362.7,563.74 Z" stroke="none" fill="#000000" stroke-width="1" />
<path d="M1355.1,569.54 L1358.9,573.54 L1362.7,569.54 Z" stroke="none" fill="#000000" stroke-width="1" />
<text transform="translate(1312.6,570.54) scale(0.81,1)" font-size="16" fill="#000" stroke="#000" stroke-width="0.15">200,0</text>
<rect x="1390.9" y="556.94" width="14.8" height="14.8" fill="#f3f3f3" stroke="#777777" stroke-width="1.2" rx="3.2" />
<rect x="1415.5" y="554.5" width="60" height="24" fill="#f0f0f0" stroke="#bdbdbd" stroke-width="1" />
<rect x="1416.5" y="555.5" width="58" height="22" fill="none" stroke="#e4e4e4" stroke-width="1" />
<rect x="1455.5" y="556.5" width="16" height="9" fill="#f0f0f0" stroke="#d6d6d6" stroke-width="1" />
<rect x="1455.5" y="566.5" width="16" height="9" fill="#f0f0f0" stroke="#d6d6d6" stroke-width="1" />
<path d="M1460.1,563.74 L1463.9,559.74 L1467.7,563.74 Z" stroke="none" fill="#555555" stroke-width="1" />
<path d="M1460.1,569.54 L1463.9,573.54 L1467.7,569.54 Z" stroke="none" fill="#555555" stroke-width="1" />
<text transform="translate(1417.6,570.54) scale(0.81,1)" font-size="16" fill="#6d6d6d" stroke="#6d6d6d" stroke-width="0.15">24,0</text>
<rect x="1483.5" y="554.5" width="60" height="24" fill="#f0f0f0" stroke="#bdbdbd" stroke-width="1" />
<rect x="1484.5" y="555.5" width="58" height="22" fill="none" stroke="#e4e4e4" stroke-width="1" />
<rect x="1523.5" y="556.5" width="16" height="9" fill="#f0f0f0" stroke="#d6d6d6" stroke-width="1" />
<rect x="1523.5" y="566.5" width="16" height="9" fill="#f0f0f0" stroke="#d6d6d6" stroke-width="1" />
<path d="M1528.1,563.74 L1531.9,559.74 L1535.7,563.74 Z" stroke="none" fill="#555555" stroke-width="1" />
<path d="M1528.1,569.54 L1531.9,573.54 L1535.7,569.54 Z" stroke="none" fill="#555555" stroke-width="1" />
<text transform="translate(1485.6,570.54) scale(0.81,1)" font-size="16" fill="#6d6d6d" stroke="#6d6d6d" stroke-width="0.15">36,0</text>
<rect x="1563.5" y="554.5" width="60" height="24" fill="#ffffff" stroke="#bdbdbd" stroke-width="1" />
<rect x="1564.5" y="555.5" width="58" height="22" fill="none" stroke="#e4e4e4" stroke-width="1" />
<rect x="1603.5" y="556.5" width="16" height="9" fill="#f0f0f0" stroke="#d6d6d6" stroke-width="1" />
<rect x="1603.5" y="566.5" width="16" height="9" fill="#f0f0f0" stroke="#d6d6d6" stroke-width="1" />
<path d="M1608.1,563.74 L1611.9,559.74 L1615.7,563.74 Z" stroke="none" fill="#000000" stroke-width="1" />
<path d="M1608.1,569.54 L1611.9,573.54 L1615.7,569.54 Z" stroke="none" fill="#000000" stroke-width="1" />
<text transform="translate(1565.6,570.54) scale(0.81,1)" font-size="16" fill="#000" stroke="#000" stroke-width="0.15">20,0</text>
<rect x="1631.5" y="554.5" width="60" height="24" fill="#ffffff" stroke="#bdbdbd" stroke-width="1" />
<rect x="1632.5" y="555.5" width="58" height="22" fill="none" stroke="#e4e4e4" stroke-width="1" />
<rect x="1671.5" y="556.5" width="16" height="9" fill="#f0f0f0" stroke="#d6d6d6" stroke-width="1" />
<rect x="1671.5" y="566.5" width="16" height="9" fill="#f0f0f0" stroke="#d6d6d6" stroke-width="1" />
<path d="M1676.3,563.74 L1680.1,559.74 L1683.9,563.74 Z" stroke="none" fill="#000000" stroke-width="1" />
<path d="M1676.3,569.54 L1680.1,573.54 L1683.9,569.54 Z" stroke="none" fill="#000000" stroke-width="1" />
<text transform="translate(1633.8,570.54) scale(0.81,1)" font-size="16" fill="#000" stroke="#000" stroke-width="0.15">200,0</text>
<rect x="1711.3" y="555.74" width="16" height="16" fill="#0063b1" rx="3.5" />
<path d="M1715.5,564.04 L1718.1,566.54 L1723.1,561.34" stroke="#ffffff" fill="none" stroke-width="1.2" stroke-linecap="round" stroke-linejoin="round"/>
<rect x="1763.6" y="556.34" width="14.8" height="14.8" fill="#f3f3f3" stroke="#777777" stroke-width="1.2" rx="3.2" />
<line x1="1804.5" y1="550.84" x2="1804.5" y2="578.34" stroke="#a8a8a8" stroke-width="1" />
<line x1="1804.4" y1="550.5" x2="1876" y2="550.5" stroke="#a8a8a8" stroke-width="1" />
<text transform="translate(1232.5,596.25) scale(0.91,1)" font-size="15" fill="#222" text-anchor="end" stroke="#222" stroke-width="0.05">Area 6</text>
<rect x="1242.5" y="581.5" width="60" height="24" fill="#ffffff" stroke="#bdbdbd" stroke-width="1" />
<rect x="1243.5" y="582.5" width="58" height="22" fill="none" stroke="#e4e4e4" stroke-width="1" />
<rect x="1282.5" y="583.5" width="16" height="9" fill="#f0f0f0" stroke="#d6d6d6" stroke-width="1" />
<rect x="1282.5" y="593.5" width="16" height="9" fill="#f0f0f0" stroke="#d6d6d6" stroke-width="1" />
<path d="M1287.3,590.95 L1291.1,586.95 L1294.9,590.95 Z" stroke="none" fill="#000000" stroke-width="1" />
<path d="M1287.3,596.75 L1291.1,600.75 L1294.9,596.75 Z" stroke="none" fill="#000000" stroke-width="1" />
<text transform="translate(1244.8,597.75) scale(0.81,1)" font-size="16" fill="#000" stroke="#000" stroke-width="0.15">0,0</text>
<rect x="1310.5" y="581.5" width="60" height="24" fill="#ffffff" stroke="#bdbdbd" stroke-width="1" />
<rect x="1311.5" y="582.5" width="58" height="22" fill="none" stroke="#e4e4e4" stroke-width="1" />
<rect x="1350.5" y="583.5" width="16" height="9" fill="#f0f0f0" stroke="#d6d6d6" stroke-width="1" />
<rect x="1350.5" y="593.5" width="16" height="9" fill="#f0f0f0" stroke="#d6d6d6" stroke-width="1" />
<path d="M1355.1,590.95 L1358.9,586.95 L1362.7,590.95 Z" stroke="none" fill="#000000" stroke-width="1" />
<path d="M1355.1,596.75 L1358.9,600.75 L1362.7,596.75 Z" stroke="none" fill="#000000" stroke-width="1" />
<text transform="translate(1312.6,597.75) scale(0.81,1)" font-size="16" fill="#000" stroke="#000" stroke-width="0.15">200,0</text>
<rect x="1390.9" y="584.15" width="14.8" height="14.8" fill="#f3f3f3" stroke="#777777" stroke-width="1.2" rx="3.2" />
<rect x="1415.5" y="581.5" width="60" height="24" fill="#f0f0f0" stroke="#bdbdbd" stroke-width="1" />
<rect x="1416.5" y="582.5" width="58" height="22" fill="none" stroke="#e4e4e4" stroke-width="1" />
<rect x="1455.5" y="583.5" width="16" height="9" fill="#f0f0f0" stroke="#d6d6d6" stroke-width="1" />
<rect x="1455.5" y="593.5" width="16" height="9" fill="#f0f0f0" stroke="#d6d6d6" stroke-width="1" />
<path d="M1460.1,590.95 L1463.9,586.95 L1467.7,590.95 Z" stroke="none" fill="#555555" stroke-width="1" />
<path d="M1460.1,596.75 L1463.9,600.75 L1467.7,596.75 Z" stroke="none" fill="#555555" stroke-width="1" />
<text transform="translate(1417.6,597.75) scale(0.81,1)" font-size="16" fill="#6d6d6d" stroke="#6d6d6d" stroke-width="0.15">24,0</text>
<rect x="1483.5" y="581.5" width="60" height="24" fill="#f0f0f0" stroke="#bdbdbd" stroke-width="1" />
<rect x="1484.5" y="582.5" width="58" height="22" fill="none" stroke="#e4e4e4" stroke-width="1" />
<rect x="1523.5" y="583.5" width="16" height="9" fill="#f0f0f0" stroke="#d6d6d6" stroke-width="1" />
<rect x="1523.5" y="593.5" width="16" height="9" fill="#f0f0f0" stroke="#d6d6d6" stroke-width="1" />
<path d="M1528.1,590.95 L1531.9,586.95 L1535.7,590.95 Z" stroke="none" fill="#555555" stroke-width="1" />
<path d="M1528.1,596.75 L1531.9,600.75 L1535.7,596.75 Z" stroke="none" fill="#555555" stroke-width="1" />
<text transform="translate(1485.6,597.75) scale(0.81,1)" font-size="16" fill="#6d6d6d" stroke="#6d6d6d" stroke-width="0.15">36,0</text>
<rect x="1563.5" y="581.5" width="60" height="24" fill="#ffffff" stroke="#bdbdbd" stroke-width="1" />
<rect x="1564.5" y="582.5" width="58" height="22" fill="none" stroke="#e4e4e4" stroke-width="1" />
<rect x="1603.5" y="583.5" width="16" height="9" fill="#f0f0f0" stroke="#d6d6d6" stroke-width="1" />
<rect x="1603.5" y="593.5" width="16" height="9" fill="#f0f0f0" stroke="#d6d6d6" stroke-width="1" />
<path d="M1608.1,590.95 L1611.9,586.95 L1615.7,590.95 Z" stroke="none" fill="#000000" stroke-width="1" />
<path d="M1608.1,596.75 L1611.9,600.75 L1615.7,596.75 Z" stroke="none" fill="#000000" stroke-width="1" />
<text transform="translate(1565.6,597.75) scale(0.81,1)" font-size="16" fill="#000" stroke="#000" stroke-width="0.15">20,0</text>
<rect x="1631.5" y="581.5" width="60" height="24" fill="#ffffff" stroke="#bdbdbd" stroke-width="1" />
<rect x="1632.5" y="582.5" width="58" height="22" fill="none" stroke="#e4e4e4" stroke-width="1" />
<rect x="1671.5" y="583.5" width="16" height="9" fill="#f0f0f0" stroke="#d6d6d6" stroke-width="1" />
<rect x="1671.5" y="593.5" width="16" height="9" fill="#f0f0f0" stroke="#d6d6d6" stroke-width="1" />
<path d="M1676.3,590.95 L1680.1,586.95 L1683.9,590.95 Z" stroke="none" fill="#000000" stroke-width="1" />
<path d="M1676.3,596.75 L1680.1,600.75 L1683.9,596.75 Z" stroke="none" fill="#000000" stroke-width="1" />
<text transform="translate(1633.8,597.75) scale(0.81,1)" font-size="16" fill="#000" stroke="#000" stroke-width="0.15">200,0</text>
<rect x="1711.3" y="582.95" width="16" height="16" fill="#0063b1" rx="3.5" />
<path d="M1715.5,591.25 L1718.1,593.75 L1723.1,588.55" stroke="#ffffff" fill="none" stroke-width="1.2" stroke-linecap="round" stroke-linejoin="round"/>
<rect x="1763.6" y="583.55" width="14.8" height="14.8" fill="#f3f3f3" stroke="#777777" stroke-width="1.2" rx="3.2" />
<line x1="1804.5" y1="578.05" x2="1804.5" y2="605.55" stroke="#a8a8a8" stroke-width="1" />
<line x1="1804.4" y1="577.5" x2="1876" y2="577.5" stroke="#a8a8a8" stroke-width="1" />
<text transform="translate(1232.5,623.46) scale(0.91,1)" font-size="15" fill="#222" text-anchor="end" stroke="#222" stroke-width="0.05">Area 7</text>
<rect x="1242.5" y="608.5" width="60" height="24" fill="#ffffff" stroke="#bdbdbd" stroke-width="1" />
<rect x="1243.5" y="609.5" width="58" height="22" fill="none" stroke="#e4e4e4" stroke-width="1" />
<rect x="1282.5" y="611.5" width="16" height="9" fill="#f0f0f0" stroke="#d6d6d6" stroke-width="1" />
<rect x="1282.5" y="620.5" width="16" height="9" fill="#f0f0f0" stroke="#d6d6d6" stroke-width="1" />
<path d="M1287.3,618.16 L1291.1,614.16 L1294.9,618.16 Z" stroke="none" fill="#000000" stroke-width="1" />
<path d="M1287.3,623.96 L1291.1,627.96 L1294.9,623.96 Z" stroke="none" fill="#000000" stroke-width="1" />
<text transform="translate(1244.8,624.96) scale(0.81,1)" font-size="16" fill="#000" stroke="#000" stroke-width="0.15">0,0</text>
<rect x="1310.5" y="608.5" width="60" height="24" fill="#ffffff" stroke="#bdbdbd" stroke-width="1" />
<rect x="1311.5" y="609.5" width="58" height="22" fill="none" stroke="#e4e4e4" stroke-width="1" />
<rect x="1350.5" y="611.5" width="16" height="9" fill="#f0f0f0" stroke="#d6d6d6" stroke-width="1" />
<rect x="1350.5" y="620.5" width="16" height="9" fill="#f0f0f0" stroke="#d6d6d6" stroke-width="1" />
<path d="M1355.1,618.16 L1358.9,614.16 L1362.7,618.16 Z" stroke="none" fill="#000000" stroke-width="1" />
<path d="M1355.1,623.96 L1358.9,627.96 L1362.7,623.96 Z" stroke="none" fill="#000000" stroke-width="1" />
<text transform="translate(1312.6,624.96) scale(0.81,1)" font-size="16" fill="#000" stroke="#000" stroke-width="0.15">200,0</text>
<rect x="1390.9" y="611.36" width="14.8" height="14.8" fill="#f3f3f3" stroke="#777777" stroke-width="1.2" rx="3.2" />
<rect x="1415.5" y="608.5" width="60" height="24" fill="#f0f0f0" stroke="#bdbdbd" stroke-width="1" />
<rect x="1416.5" y="609.5" width="58" height="22" fill="none" stroke="#e4e4e4" stroke-width="1" />
<rect x="1455.5" y="611.5" width="16" height="9" fill="#f0f0f0" stroke="#d6d6d6" stroke-width="1" />
<rect x="1455.5" y="620.5" width="16" height="9" fill="#f0f0f0" stroke="#d6d6d6" stroke-width="1" />
<path d="M1460.1,618.16 L1463.9,614.16 L1467.7,618.16 Z" stroke="none" fill="#555555" stroke-width="1" />
<path d="M1460.1,623.96 L1463.9,627.96 L1467.7,623.96 Z" stroke="none" fill="#555555" stroke-width="1" />
<text transform="translate(1417.6,624.96) scale(0.81,1)" font-size="16" fill="#6d6d6d" stroke="#6d6d6d" stroke-width="0.15">24,0</text>
<rect x="1483.5" y="608.5" width="60" height="24" fill="#f0f0f0" stroke="#bdbdbd" stroke-width="1" />
<rect x="1484.5" y="609.5" width="58" height="22" fill="none" stroke="#e4e4e4" stroke-width="1" />
<rect x="1523.5" y="611.5" width="16" height="9" fill="#f0f0f0" stroke="#d6d6d6" stroke-width="1" />
<rect x="1523.5" y="620.5" width="16" height="9" fill="#f0f0f0" stroke="#d6d6d6" stroke-width="1" />
<path d="M1528.1,618.16 L1531.9,614.16 L1535.7,618.16 Z" stroke="none" fill="#555555" stroke-width="1" />
<path d="M1528.1,623.96 L1531.9,627.96 L1535.7,623.96 Z" stroke="none" fill="#555555" stroke-width="1" />
<text transform="translate(1485.6,624.96) scale(0.81,1)" font-size="16" fill="#6d6d6d" stroke="#6d6d6d" stroke-width="0.15">36,0</text>
<rect x="1563.5" y="608.5" width="60" height="24" fill="#ffffff" stroke="#bdbdbd" stroke-width="1" />
<rect x="1564.5" y="609.5" width="58" height="22" fill="none" stroke="#e4e4e4" stroke-width="1" />
<rect x="1603.5" y="611.5" width="16" height="9" fill="#f0f0f0" stroke="#d6d6d6" stroke-width="1" />
<rect x="1603.5" y="620.5" width="16" height="9" fill="#f0f0f0" stroke="#d6d6d6" stroke-width="1" />
<path d="M1608.1,618.16 L1611.9,614.16 L1615.7,618.16 Z" stroke="none" fill="#000000" stroke-width="1" />
<path d="M1608.1,623.96 L1611.9,627.96 L1615.7,623.96 Z" stroke="none" fill="#000000" stroke-width="1" />
<text transform="translate(1565.6,624.96) scale(0.81,1)" font-size="16" fill="#000" stroke="#000" stroke-width="0.15">20,0</text>
<rect x="1631.5" y="608.5" width="60" height="24" fill="#ffffff" stroke="#bdbdbd" stroke-width="1" />
<rect x="1632.5" y="609.5" width="58" height="22" fill="none" stroke="#e4e4e4" stroke-width="1" />
<rect x="1671.5" y="611.5" width="16" height="9" fill="#f0f0f0" stroke="#d6d6d6" stroke-width="1" />
<rect x="1671.5" y="620.5" width="16" height="9" fill="#f0f0f0" stroke="#d6d6d6" stroke-width="1" />
<path d="M1676.3,618.16 L1680.1,614.16 L1683.9,618.16 Z" stroke="none" fill="#000000" stroke-width="1" />
<path d="M1676.3,623.96 L1680.1,627.96 L1683.9,623.96 Z" stroke="none" fill="#000000" stroke-width="1" />
<text transform="translate(1633.8,624.96) scale(0.81,1)" font-size="16" fill="#000" stroke="#000" stroke-width="0.15">200,0</text>
<rect x="1711.3" y="610.16" width="16" height="16" fill="#0063b1" rx="3.5" />
<path d="M1715.5,618.46 L1718.1,620.96 L1723.1,615.76" stroke="#ffffff" fill="none" stroke-width="1.2" stroke-linecap="round" stroke-linejoin="round"/>
<rect x="1763.6" y="610.76" width="14.8" height="14.8" fill="#f3f3f3" stroke="#777777" stroke-width="1.2" rx="3.2" />
<line x1="1804.5" y1="605.26" x2="1804.5" y2="632.76" stroke="#a8a8a8" stroke-width="1" />
<line x1="1804.4" y1="604.5" x2="1876" y2="604.5" stroke="#a8a8a8" stroke-width="1" />
<text transform="translate(1232.5,650.67) scale(0.91,1)" font-size="15" fill="#222" text-anchor="end" stroke="#222" stroke-width="0.05">Area 8</text>
<rect x="1242.5" y="635.5" width="60" height="24" fill="#ffffff" stroke="#bdbdbd" stroke-width="1" />
<rect x="1243.5" y="636.5" width="58" height="22" fill="none" stroke="#e4e4e4" stroke-width="1" />
<rect x="1282.5" y="638.5" width="16" height="9" fill="#f0f0f0" stroke="#d6d6d6" stroke-width="1" />
<rect x="1282.5" y="647.5" width="16" height="9" fill="#f0f0f0" stroke="#d6d6d6" stroke-width="1" />
<path d="M1287.3,645.37 L1291.1,641.37 L1294.9,645.37 Z" stroke="none" fill="#000000" stroke-width="1" />
<path d="M1287.3,651.17 L1291.1,655.17 L1294.9,651.17 Z" stroke="none" fill="#000000" stroke-width="1" />
<text transform="translate(1244.8,652.17) scale(0.81,1)" font-size="16" fill="#000" stroke="#000" stroke-width="0.15">0,0</text>
<rect x="1310.5" y="635.5" width="60" height="24" fill="#ffffff" stroke="#bdbdbd" stroke-width="1" />
<rect x="1311.5" y="636.5" width="58" height="22" fill="none" stroke="#e4e4e4" stroke-width="1" />
<rect x="1350.5" y="638.5" width="16" height="9" fill="#f0f0f0" stroke="#d6d6d6" stroke-width="1" />
<rect x="1350.5" y="647.5" width="16" height="9" fill="#f0f0f0" stroke="#d6d6d6" stroke-width="1" />
<path d="M1355.1,645.37 L1358.9,641.37 L1362.7,645.37 Z" stroke="none" fill="#000000" stroke-width="1" />
<path d="M1355.1,651.17 L1358.9,655.17 L1362.7,651.17 Z" stroke="none" fill="#000000" stroke-width="1" />
<text transform="translate(1312.6,652.17) scale(0.81,1)" font-size="16" fill="#000" stroke="#000" stroke-width="0.15">250,0</text>
<rect x="1390.9" y="638.57" width="14.8" height="14.8" fill="#f3f3f3" stroke="#777777" stroke-width="1.2" rx="3.2" />
<rect x="1415.5" y="635.5" width="60" height="24" fill="#f0f0f0" stroke="#bdbdbd" stroke-width="1" />
<rect x="1416.5" y="636.5" width="58" height="22" fill="none" stroke="#e4e4e4" stroke-width="1" />
<rect x="1455.5" y="638.5" width="16" height="9" fill="#f0f0f0" stroke="#d6d6d6" stroke-width="1" />
<rect x="1455.5" y="647.5" width="16" height="9" fill="#f0f0f0" stroke="#d6d6d6" stroke-width="1" />
<path d="M1460.1,645.37 L1463.9,641.37 L1467.7,645.37 Z" stroke="none" fill="#555555" stroke-width="1" />
<path d="M1460.1,651.17 L1463.9,655.17 L1467.7,651.17 Z" stroke="none" fill="#555555" stroke-width="1" />
<text transform="translate(1417.6,652.17) scale(0.81,1)" font-size="16" fill="#6d6d6d" stroke="#6d6d6d" stroke-width="0.15">24,0</text>
<rect x="1483.5" y="635.5" width="60" height="24" fill="#f0f0f0" stroke="#bdbdbd" stroke-width="1" />
<rect x="1484.5" y="636.5" width="58" height="22" fill="none" stroke="#e4e4e4" stroke-width="1" />
<rect x="1523.5" y="638.5" width="16" height="9" fill="#f0f0f0" stroke="#d6d6d6" stroke-width="1" />
<rect x="1523.5" y="647.5" width="16" height="9" fill="#f0f0f0" stroke="#d6d6d6" stroke-width="1" />
<path d="M1528.1,645.37 L1531.9,641.37 L1535.7,645.37 Z" stroke="none" fill="#555555" stroke-width="1" />
<path d="M1528.1,651.17 L1531.9,655.17 L1535.7,651.17 Z" stroke="none" fill="#555555" stroke-width="1" />
<text transform="translate(1485.6,652.17) scale(0.81,1)" font-size="16" fill="#6d6d6d" stroke="#6d6d6d" stroke-width="0.15">36,0</text>
<rect x="1563.5" y="635.5" width="60" height="24" fill="#ffffff" stroke="#bdbdbd" stroke-width="1" />
<rect x="1564.5" y="636.5" width="58" height="22" fill="none" stroke="#e4e4e4" stroke-width="1" />
<rect x="1603.5" y="638.5" width="16" height="9" fill="#f0f0f0" stroke="#d6d6d6" stroke-width="1" />
<rect x="1603.5" y="647.5" width="16" height="9" fill="#f0f0f0" stroke="#d6d6d6" stroke-width="1" />
<path d="M1608.1,645.37 L1611.9,641.37 L1615.7,645.37 Z" stroke="none" fill="#000000" stroke-width="1" />
<path d="M1608.1,651.17 L1611.9,655.17 L1615.7,651.17 Z" stroke="none" fill="#000000" stroke-width="1" />
<text transform="translate(1565.6,652.17) scale(0.81,1)" font-size="16" fill="#000" stroke="#000" stroke-width="0.15">20,0</text>
<rect x="1631.5" y="635.5" width="60" height="24" fill="#ffffff" stroke="#bdbdbd" stroke-width="1" />
<rect x="1632.5" y="636.5" width="58" height="22" fill="none" stroke="#e4e4e4" stroke-width="1" />
<rect x="1671.5" y="638.5" width="16" height="9" fill="#f0f0f0" stroke="#d6d6d6" stroke-width="1" />
<rect x="1671.5" y="647.5" width="16" height="9" fill="#f0f0f0" stroke="#d6d6d6" stroke-width="1" />
<path d="M1676.3,645.37 L1680.1,641.37 L1683.9,645.37 Z" stroke="none" fill="#000000" stroke-width="1" />
<path d="M1676.3,651.17 L1680.1,655.17 L1683.9,651.17 Z" stroke="none" fill="#000000" stroke-width="1" />
<text transform="translate(1633.8,652.17) scale(0.81,1)" font-size="16" fill="#000" stroke="#000" stroke-width="0.15">240,0</text>
<rect x="1711.3" y="637.37" width="16" height="16" fill="#0063b1" rx="3.5" />
<path d="M1715.5,645.67 L1718.1,648.17 L1723.1,642.97" stroke="#ffffff" fill="none" stroke-width="1.2" stroke-linecap="round" stroke-linejoin="round"/>
<rect x="1763.6" y="637.97" width="14.8" height="14.8" fill="#f3f3f3" stroke="#777777" stroke-width="1.2" rx="3.2" />
<line x1="1804.5" y1="632.47" x2="1804.5" y2="659.97" stroke="#a8a8a8" stroke-width="1" />
<line x1="1804.4" y1="631.5" x2="1876" y2="631.5" stroke="#a8a8a8" stroke-width="1" />
<text transform="translate(1210,681.9) scale(0.9,1)" font-size="15" fill="#000" text-anchor="end" font-weight="bold" stroke="#000" stroke-width="0.15">[All]:</text>
<rect x="1218.1" y="670" width="14.8" height="14.8" fill="#f3f3f3" stroke="#777777" stroke-width="1.2" rx="3.2" />
<line x1="1115" y1="692.5" x2="1896" y2="692.5" stroke="#a0a0a0" stroke-width="1" />
<line x1="1115" y1="693.5" x2="1896" y2="693.5" stroke="#ffffff" stroke-width="1" />
<text transform="translate(1232.5,717.45) scale(0.91,1)" font-size="15" fill="#222" text-anchor="end" stroke="#222" stroke-width="0.05">Cursor</text>
<rect x="1242.5" y="702.5" width="60" height="24" fill="#ffffff" stroke="#bdbdbd" stroke-width="1" />
<rect x="1243.5" y="703.5" width="58" height="22" fill="none" stroke="#e4e4e4" stroke-width="1" />
<rect x="1282.5" y="705.5" width="16" height="9" fill="#f0f0f0" stroke="#d6d6d6" stroke-width="1" />
<rect x="1282.5" y="714.5" width="16" height="9" fill="#f0f0f0" stroke="#d6d6d6" stroke-width="1" />
<path d="M1287.3,712.15 L1291.1,708.15 L1294.9,712.15 Z" stroke="none" fill="#000000" stroke-width="1" />
<path d="M1287.3,717.95 L1291.1,721.95 L1294.9,717.95 Z" stroke="none" fill="#000000" stroke-width="1" />
<text transform="translate(1244.8,718.95) scale(0.81,1)" font-size="16" fill="#000" stroke="#000" stroke-width="0.15">0,0</text>
<rect x="1310.5" y="702.5" width="60" height="24" fill="#ffffff" stroke="#bdbdbd" stroke-width="1" />
<rect x="1311.5" y="703.5" width="58" height="22" fill="none" stroke="#e4e4e4" stroke-width="1" />
<rect x="1350.5" y="705.5" width="16" height="9" fill="#f0f0f0" stroke="#d6d6d6" stroke-width="1" />
<rect x="1350.5" y="714.5" width="16" height="9" fill="#f0f0f0" stroke="#d6d6d6" stroke-width="1" />
<path d="M1355.1,712.15 L1358.9,708.15 L1362.7,712.15 Z" stroke="none" fill="#000000" stroke-width="1" />
<path d="M1355.1,717.95 L1358.9,721.95 L1362.7,717.95 Z" stroke="none" fill="#000000" stroke-width="1" />
<text transform="translate(1312.6,718.95) scale(0.81,1)" font-size="16" fill="#000" stroke="#000" stroke-width="0.15">100,0</text>
<rect x="1390.9" y="705.35" width="14.8" height="14.8" fill="#f3f3f3" stroke="#777777" stroke-width="1.2" rx="3.2" />
<rect x="1415.5" y="702.5" width="60" height="24" fill="#f0f0f0" stroke="#bdbdbd" stroke-width="1" />
<rect x="1416.5" y="703.5" width="58" height="22" fill="none" stroke="#e4e4e4" stroke-width="1" />
<rect x="1455.5" y="705.5" width="16" height="9" fill="#f0f0f0" stroke="#d6d6d6" stroke-width="1" />
<rect x="1455.5" y="714.5" width="16" height="9" fill="#f0f0f0" stroke="#d6d6d6" stroke-width="1" />
<path d="M1460.1,712.15 L1463.9,708.15 L1467.7,712.15 Z" stroke="none" fill="#555555" stroke-width="1" />
<path d="M1460.1,717.95 L1463.9,721.95 L1467.7,717.95 Z" stroke="none" fill="#555555" stroke-width="1" />
<text transform="translate(1417.6,718.95) scale(0.81,1)" font-size="16" fill="#6d6d6d" stroke="#6d6d6d" stroke-width="0.15">24,0</text>
<rect x="1483.5" y="702.5" width="60" height="24" fill="#f0f0f0" stroke="#bdbdbd" stroke-width="1" />
<rect x="1484.5" y="703.5" width="58" height="22" fill="none" stroke="#e4e4e4" stroke-width="1" />
<rect x="1523.5" y="705.5" width="16" height="9" fill="#f0f0f0" stroke="#d6d6d6" stroke-width="1" />
<rect x="1523.5" y="714.5" width="16" height="9" fill="#f0f0f0" stroke="#d6d6d6" stroke-width="1" />
<path d="M1528.1,712.15 L1531.9,708.15 L1535.7,712.15 Z" stroke="none" fill="#555555" stroke-width="1" />
<path d="M1528.1,717.95 L1531.9,721.95 L1535.7,717.95 Z" stroke="none" fill="#555555" stroke-width="1" />
<text transform="translate(1485.6,718.95) scale(0.81,1)" font-size="16" fill="#6d6d6d" stroke="#6d6d6d" stroke-width="0.15">36,0</text>
<rect x="1563.5" y="702.5" width="60" height="24" fill="#ffffff" stroke="#bdbdbd" stroke-width="1" />
<rect x="1564.5" y="703.5" width="58" height="22" fill="none" stroke="#e4e4e4" stroke-width="1" />
<rect x="1603.5" y="705.5" width="16" height="9" fill="#f0f0f0" stroke="#d6d6d6" stroke-width="1" />
<rect x="1603.5" y="714.5" width="16" height="9" fill="#f0f0f0" stroke="#d6d6d6" stroke-width="1" />
<path d="M1608.1,712.15 L1611.9,708.15 L1615.7,712.15 Z" stroke="none" fill="#000000" stroke-width="1" />
<path d="M1608.1,717.95 L1611.9,721.95 L1615.7,717.95 Z" stroke="none" fill="#000000" stroke-width="1" />
<text transform="translate(1565.6,718.95) scale(0.81,1)" font-size="16" fill="#000" stroke="#000" stroke-width="0.15">20,0</text>
<rect x="1631.5" y="702.5" width="60" height="24" fill="#ffffff" stroke="#bdbdbd" stroke-width="1" />
<rect x="1632.5" y="703.5" width="58" height="22" fill="none" stroke="#e4e4e4" stroke-width="1" />
<rect x="1671.5" y="705.5" width="16" height="9" fill="#f0f0f0" stroke="#d6d6d6" stroke-width="1" />
<rect x="1671.5" y="714.5" width="16" height="9" fill="#f0f0f0" stroke="#d6d6d6" stroke-width="1" />
<path d="M1676.3,712.15 L1680.1,708.15 L1683.9,712.15 Z" stroke="none" fill="#000000" stroke-width="1" />
<path d="M1676.3,717.95 L1680.1,721.95 L1683.9,717.95 Z" stroke="none" fill="#000000" stroke-width="1" />
<text transform="translate(1633.8,718.95) scale(0.81,1)" font-size="16" fill="#000" stroke="#000" stroke-width="0.15">40,0</text>
<rect x="1711.3" y="704.15" width="16" height="16" fill="#0063b1" rx="3.5" />
<path d="M1715.5,712.45 L1718.1,714.95 L1723.1,709.75" stroke="#ffffff" fill="none" stroke-width="1.2" stroke-linecap="round" stroke-linejoin="round"/>
<rect x="1763.6" y="704.75" width="14.8" height="14.8" fill="#f3f3f3" stroke="#777777" stroke-width="1.2" rx="3.2" />
<line x1="1804.5" y1="699.25" x2="1804.5" y2="726.75" stroke="#a8a8a8" stroke-width="1" />
<line x1="1804.4" y1="698.5" x2="1876" y2="698.5" stroke="#a8a8a8" stroke-width="1" />
<text transform="translate(1232.5,744.66) scale(0.91,1)" font-size="15" fill="#222" text-anchor="end" stroke="#222" stroke-width="0.05">Chip</text>
<rect x="1242.5" y="729.5" width="60" height="24" fill="#ffffff" stroke="#bdbdbd" stroke-width="1" />
<rect x="1243.5" y="730.5" width="58" height="22" fill="none" stroke="#e4e4e4" stroke-width="1" />
<rect x="1282.5" y="732.5" width="16" height="9" fill="#f0f0f0" stroke="#d6d6d6" stroke-width="1" />
<rect x="1282.5" y="741.5" width="16" height="9" fill="#f0f0f0" stroke="#d6d6d6" stroke-width="1" />
<path d="M1287.3,739.36 L1291.1,735.36 L1294.9,739.36 Z" stroke="none" fill="#000000" stroke-width="1" />
<path d="M1287.3,745.16 L1291.1,749.16 L1294.9,745.16 Z" stroke="none" fill="#000000" stroke-width="1" />
<text transform="translate(1244.8,746.16) scale(0.81,1)" font-size="16" fill="#000" stroke="#000" stroke-width="0.15">0,0</text>
<rect x="1310.5" y="729.5" width="60" height="24" fill="#ffffff" stroke="#bdbdbd" stroke-width="1" />
<rect x="1311.5" y="730.5" width="58" height="22" fill="none" stroke="#e4e4e4" stroke-width="1" />
<rect x="1350.5" y="732.5" width="16" height="9" fill="#f0f0f0" stroke="#d6d6d6" stroke-width="1" />
<rect x="1350.5" y="741.5" width="16" height="9" fill="#f0f0f0" stroke="#d6d6d6" stroke-width="1" />
<path d="M1355.1,739.36 L1358.9,735.36 L1362.7,739.36 Z" stroke="none" fill="#000000" stroke-width="1" />
<path d="M1355.1,745.16 L1358.9,749.16 L1362.7,745.16 Z" stroke="none" fill="#000000" stroke-width="1" />
<text transform="translate(1312.6,746.16) scale(0.81,1)" font-size="16" fill="#000" stroke="#000" stroke-width="0.15">100,0</text>
<rect x="1390.9" y="732.56" width="14.8" height="14.8" fill="#f3f3f3" stroke="#777777" stroke-width="1.2" rx="3.2" />
<rect x="1415.5" y="729.5" width="60" height="24" fill="#f0f0f0" stroke="#bdbdbd" stroke-width="1" />
<rect x="1416.5" y="730.5" width="58" height="22" fill="none" stroke="#e4e4e4" stroke-width="1" />
<rect x="1455.5" y="732.5" width="16" height="9" fill="#f0f0f0" stroke="#d6d6d6" stroke-width="1" />
<rect x="1455.5" y="741.5" width="16" height="9" fill="#f0f0f0" stroke="#d6d6d6" stroke-width="1" />
<path d="M1460.1,739.36 L1463.9,735.36 L1467.7,739.36 Z" stroke="none" fill="#555555" stroke-width="1" />
<path d="M1460.1,745.16 L1463.9,749.16 L1467.7,745.16 Z" stroke="none" fill="#555555" stroke-width="1" />
<text transform="translate(1417.6,746.16) scale(0.81,1)" font-size="16" fill="#6d6d6d" stroke="#6d6d6d" stroke-width="0.15">10,0</text>
<rect x="1483.5" y="729.5" width="60" height="24" fill="#f0f0f0" stroke="#bdbdbd" stroke-width="1" />
<rect x="1484.5" y="730.5" width="58" height="22" fill="none" stroke="#e4e4e4" stroke-width="1" />
<rect x="1523.5" y="732.5" width="16" height="9" fill="#f0f0f0" stroke="#d6d6d6" stroke-width="1" />
<rect x="1523.5" y="741.5" width="16" height="9" fill="#f0f0f0" stroke="#d6d6d6" stroke-width="1" />
<path d="M1528.1,739.36 L1531.9,735.36 L1535.7,739.36 Z" stroke="none" fill="#555555" stroke-width="1" />
<path d="M1528.1,745.16 L1531.9,749.16 L1535.7,745.16 Z" stroke="none" fill="#555555" stroke-width="1" />
<text transform="translate(1485.6,746.16) scale(0.81,1)" font-size="16" fill="#6d6d6d" stroke="#6d6d6d" stroke-width="0.15">65,0</text>
<rect x="1563.5" y="729.5" width="60" height="24" fill="#ffffff" stroke="#bdbdbd" stroke-width="1" />
<rect x="1564.5" y="730.5" width="58" height="22" fill="none" stroke="#e4e4e4" stroke-width="1" />
<rect x="1603.5" y="732.5" width="16" height="9" fill="#f0f0f0" stroke="#d6d6d6" stroke-width="1" />
<rect x="1603.5" y="741.5" width="16" height="9" fill="#f0f0f0" stroke="#d6d6d6" stroke-width="1" />
<path d="M1608.1,739.36 L1611.9,735.36 L1615.7,739.36 Z" stroke="none" fill="#000000" stroke-width="1" />
<path d="M1608.1,745.16 L1611.9,749.16 L1615.7,745.16 Z" stroke="none" fill="#000000" stroke-width="1" />
<text transform="translate(1565.6,746.16) scale(0.81,1)" font-size="16" fill="#000" stroke="#000" stroke-width="0.15">5,0</text>
<rect x="1631.5" y="729.5" width="60" height="24" fill="#ffffff" stroke="#bdbdbd" stroke-width="1" />
<rect x="1632.5" y="730.5" width="58" height="22" fill="none" stroke="#e4e4e4" stroke-width="1" />
<rect x="1671.5" y="732.5" width="16" height="9" fill="#f0f0f0" stroke="#d6d6d6" stroke-width="1" />
<rect x="1671.5" y="741.5" width="16" height="9" fill="#f0f0f0" stroke="#d6d6d6" stroke-width="1" />
<path d="M1676.3,739.36 L1680.1,735.36 L1683.9,739.36 Z" stroke="none" fill="#000000" stroke-width="1" />
<path d="M1676.3,745.16 L1680.1,749.16 L1683.9,745.16 Z" stroke="none" fill="#000000" stroke-width="1" />
<text transform="translate(1633.8,746.16) scale(0.81,1)" font-size="16" fill="#000" stroke="#000" stroke-width="0.15">70,0</text>
<rect x="1711.3" y="731.36" width="16" height="16" fill="#0063b1" rx="3.5" />
<path d="M1715.5,739.66 L1718.1,742.16 L1723.1,736.96" stroke="#ffffff" fill="none" stroke-width="1.2" stroke-linecap="round" stroke-linejoin="round"/>
<rect x="1763.6" y="731.96" width="14.8" height="14.8" fill="#f3f3f3" stroke="#777777" stroke-width="1.2" rx="3.2" />
<line x1="1804.5" y1="726.46" x2="1804.5" y2="753.96" stroke="#a8a8a8" stroke-width="1" />
<line x1="1804.4" y1="725.5" x2="1876" y2="725.5" stroke="#a8a8a8" stroke-width="1" />
<text transform="translate(1232.5,771.87) scale(0.91,1)" font-size="15" fill="#222" text-anchor="end" stroke="#222" stroke-width="0.05">Internal</text>
<rect x="1242.5" y="757.5" width="60" height="24" fill="#ffffff" stroke="#bdbdbd" stroke-width="1" />
<rect x="1243.5" y="758.5" width="58" height="22" fill="none" stroke="#e4e4e4" stroke-width="1" />
<rect x="1282.5" y="759.5" width="16" height="9" fill="#f0f0f0" stroke="#d6d6d6" stroke-width="1" />
<rect x="1282.5" y="769.5" width="16" height="9" fill="#f0f0f0" stroke="#d6d6d6" stroke-width="1" />
<path d="M1287.3,766.57 L1291.1,762.57 L1294.9,766.57 Z" stroke="none" fill="#000000" stroke-width="1" />
<path d="M1287.3,772.37 L1291.1,776.37 L1294.9,772.37 Z" stroke="none" fill="#000000" stroke-width="1" />
<text transform="translate(1244.8,773.37) scale(0.81,1)" font-size="16" fill="#000" stroke="#000" stroke-width="0.15">0,0</text>
<rect x="1310.5" y="757.5" width="60" height="24" fill="#ffffff" stroke="#bdbdbd" stroke-width="1" />
<rect x="1311.5" y="758.5" width="58" height="22" fill="none" stroke="#e4e4e4" stroke-width="1" />
<rect x="1350.5" y="759.5" width="16" height="9" fill="#f0f0f0" stroke="#d6d6d6" stroke-width="1" />
<rect x="1350.5" y="769.5" width="16" height="9" fill="#f0f0f0" stroke="#d6d6d6" stroke-width="1" />
<path d="M1355.1,766.57 L1358.9,762.57 L1362.7,766.57 Z" stroke="none" fill="#000000" stroke-width="1" />
<path d="M1355.1,772.37 L1358.9,776.37 L1362.7,772.37 Z" stroke="none" fill="#000000" stroke-width="1" />
<text transform="translate(1312.6,773.37) scale(0.81,1)" font-size="16" fill="#000" stroke="#000" stroke-width="0.15">60,0</text>
<rect x="1390.3" y="759.17" width="16" height="16" fill="#0063b1" rx="3.5" />
<path d="M1394.5,767.47 L1397.1,769.97 L1402.1,764.77" stroke="#ffffff" fill="none" stroke-width="1.2" stroke-linecap="round" stroke-linejoin="round"/>
<rect x="1415.5" y="757.5" width="60" height="24" fill="#ffffff" stroke="#bdbdbd" stroke-width="1" />
<rect x="1416.5" y="758.5" width="58" height="22" fill="none" stroke="#e4e4e4" stroke-width="1" />
<rect x="1455.5" y="759.5" width="16" height="9" fill="#f0f0f0" stroke="#d6d6d6" stroke-width="1" />
<rect x="1455.5" y="769.5" width="16" height="9" fill="#f0f0f0" stroke="#d6d6d6" stroke-width="1" />
<path d="M1460.1,766.57 L1463.9,762.57 L1467.7,766.57 Z" stroke="none" fill="#000000" stroke-width="1" />
<path d="M1460.1,772.37 L1463.9,776.37 L1467.7,772.37 Z" stroke="none" fill="#000000" stroke-width="1" />
<text transform="translate(1417.6,773.37) scale(0.81,1)" font-size="16" fill="#000" stroke="#000" stroke-width="0.15">10,0</text>
<rect x="1483.5" y="757.5" width="60" height="24" fill="#ffffff" stroke="#bdbdbd" stroke-width="1" />
<rect x="1484.5" y="758.5" width="58" height="22" fill="none" stroke="#e4e4e4" stroke-width="1" />
<rect x="1523.5" y="759.5" width="16" height="9" fill="#f0f0f0" stroke="#d6d6d6" stroke-width="1" />
<rect x="1523.5" y="769.5" width="16" height="9" fill="#f0f0f0" stroke="#d6d6d6" stroke-width="1" />
<path d="M1528.1,766.57 L1531.9,762.57 L1535.7,766.57 Z" stroke="none" fill="#000000" stroke-width="1" />
<path d="M1528.1,772.37 L1531.9,776.37 L1535.7,772.37 Z" stroke="none" fill="#000000" stroke-width="1" />
<text transform="translate(1485.6,773.37) scale(0.81,1)" font-size="16" fill="#000" stroke="#000" stroke-width="0.15">40,0</text>
<rect x="1563.5" y="757.5" width="60" height="24" fill="#ffffff" stroke="#bdbdbd" stroke-width="1" />
<rect x="1564.5" y="758.5" width="58" height="22" fill="none" stroke="#e4e4e4" stroke-width="1" />
<rect x="1603.5" y="759.5" width="16" height="9" fill="#f0f0f0" stroke="#d6d6d6" stroke-width="1" />
<rect x="1603.5" y="769.5" width="16" height="9" fill="#f0f0f0" stroke="#d6d6d6" stroke-width="1" />
<path d="M1608.1,766.57 L1611.9,762.57 L1615.7,766.57 Z" stroke="none" fill="#000000" stroke-width="1" />
<path d="M1608.1,772.37 L1611.9,776.37 L1615.7,772.37 Z" stroke="none" fill="#000000" stroke-width="1" />
<text transform="translate(1565.6,773.37) scale(0.81,1)" font-size="16" fill="#000" stroke="#000" stroke-width="0.15">5,0</text>
<rect x="1631.5" y="757.5" width="60" height="24" fill="#ffffff" stroke="#bdbdbd" stroke-width="1" />
<rect x="1632.5" y="758.5" width="58" height="22" fill="none" stroke="#e4e4e4" stroke-width="1" />
<rect x="1671.5" y="759.5" width="16" height="9" fill="#f0f0f0" stroke="#d6d6d6" stroke-width="1" />
<rect x="1671.5" y="769.5" width="16" height="9" fill="#f0f0f0" stroke="#d6d6d6" stroke-width="1" />
<path d="M1676.3,766.57 L1680.1,762.57 L1683.9,766.57 Z" stroke="none" fill="#000000" stroke-width="1" />
<path d="M1676.3,772.37 L1680.1,776.37 L1683.9,772.37 Z" stroke="none" fill="#000000" stroke-width="1" />
<text transform="translate(1633.8,773.37) scale(0.81,1)" font-size="16" fill="#000" stroke="#000" stroke-width="0.15">45,0</text>
<rect x="1711.3" y="758.57" width="16" height="16" fill="#0063b1" rx="3.5" />
<path d="M1715.5,766.87 L1718.1,769.37 L1723.1,764.17" stroke="#ffffff" fill="none" stroke-width="1.2" stroke-linecap="round" stroke-linejoin="round"/>
<rect x="1763.6" y="759.17" width="14.8" height="14.8" fill="#f3f3f3" stroke="#777777" stroke-width="1.2" rx="3.2" />
<line x1="1804.5" y1="753.67" x2="1804.5" y2="781.17" stroke="#a8a8a8" stroke-width="1" />
<line x1="1804.4" y1="753.5" x2="1876" y2="753.5" stroke="#a8a8a8" stroke-width="1" />
<text transform="translate(1232.5,799.08) scale(0.91,1)" font-size="15" fill="#222" text-anchor="end" stroke="#222" stroke-width="0.05">Reference</text>
<rect x="1242.5" y="784.5" width="60" height="24" fill="#ffffff" stroke="#bdbdbd" stroke-width="1" />
<rect x="1243.5" y="785.5" width="58" height="22" fill="none" stroke="#e4e4e4" stroke-width="1" />
<rect x="1282.5" y="786.5" width="16" height="9" fill="#f0f0f0" stroke="#d6d6d6" stroke-width="1" />
<rect x="1282.5" y="796.5" width="16" height="9" fill="#f0f0f0" stroke="#d6d6d6" stroke-width="1" />
<path d="M1287.3,793.78 L1291.1,789.78 L1294.9,793.78 Z" stroke="none" fill="#000000" stroke-width="1" />
<path d="M1287.3,799.58 L1291.1,803.58 L1294.9,799.58 Z" stroke="none" fill="#000000" stroke-width="1" />
<text transform="translate(1244.8,800.58) scale(0.81,1)" font-size="16" fill="#000" stroke="#000" stroke-width="0.15">0,0</text>
<rect x="1310.5" y="784.5" width="60" height="24" fill="#ffffff" stroke="#bdbdbd" stroke-width="1" />
<rect x="1311.5" y="785.5" width="58" height="22" fill="none" stroke="#e4e4e4" stroke-width="1" />
<rect x="1350.5" y="786.5" width="16" height="9" fill="#f0f0f0" stroke="#d6d6d6" stroke-width="1" />
<rect x="1350.5" y="796.5" width="16" height="9" fill="#f0f0f0" stroke="#d6d6d6" stroke-width="1" />
<path d="M1355.1,793.78 L1358.9,789.78 L1362.7,793.78 Z" stroke="none" fill="#000000" stroke-width="1" />
<path d="M1355.1,799.58 L1358.9,803.58 L1362.7,799.58 Z" stroke="none" fill="#000000" stroke-width="1" />
<text transform="translate(1312.6,800.58) scale(0.81,1)" font-size="16" fill="#000" stroke="#000" stroke-width="0.15">100,0</text>
<rect x="1390.9" y="786.98" width="14.8" height="14.8" fill="#f3f3f3" stroke="#777777" stroke-width="1.2" rx="3.2" />
<rect x="1415.5" y="784.5" width="60" height="24" fill="#f0f0f0" stroke="#bdbdbd" stroke-width="1" />
<rect x="1416.5" y="785.5" width="58" height="22" fill="none" stroke="#e4e4e4" stroke-width="1" />
<rect x="1455.5" y="786.5" width="16" height="9" fill="#f0f0f0" stroke="#d6d6d6" stroke-width="1" />
<rect x="1455.5" y="796.5" width="16" height="9" fill="#f0f0f0" stroke="#d6d6d6" stroke-width="1" />
<path d="M1460.1,793.78 L1463.9,789.78 L1467.7,793.78 Z" stroke="none" fill="#555555" stroke-width="1" />
<path d="M1460.1,799.58 L1463.9,803.58 L1467.7,799.58 Z" stroke="none" fill="#555555" stroke-width="1" />
<text transform="translate(1417.6,800.58) scale(0.81,1)" font-size="16" fill="#6d6d6d" stroke="#6d6d6d" stroke-width="0.15">24,0</text>
<rect x="1483.5" y="784.5" width="60" height="24" fill="#f0f0f0" stroke="#bdbdbd" stroke-width="1" />
<rect x="1484.5" y="785.5" width="58" height="22" fill="none" stroke="#e4e4e4" stroke-width="1" />
<rect x="1523.5" y="786.5" width="16" height="9" fill="#f0f0f0" stroke="#d6d6d6" stroke-width="1" />
<rect x="1523.5" y="796.5" width="16" height="9" fill="#f0f0f0" stroke="#d6d6d6" stroke-width="1" />
<path d="M1528.1,793.78 L1531.9,789.78 L1535.7,793.78 Z" stroke="none" fill="#555555" stroke-width="1" />
<path d="M1528.1,799.58 L1531.9,803.58 L1535.7,799.58 Z" stroke="none" fill="#555555" stroke-width="1" />
<text transform="translate(1485.6,800.58) scale(0.81,1)" font-size="16" fill="#6d6d6d" stroke="#6d6d6d" stroke-width="0.15">36,0</text>
<rect x="1563.5" y="784.5" width="60" height="24" fill="#ffffff" stroke="#bdbdbd" stroke-width="1" />
<rect x="1564.5" y="785.5" width="58" height="22" fill="none" stroke="#e4e4e4" stroke-width="1" />
<rect x="1603.5" y="786.5" width="16" height="9" fill="#f0f0f0" stroke="#d6d6d6" stroke-width="1" />
<rect x="1603.5" y="796.5" width="16" height="9" fill="#f0f0f0" stroke="#d6d6d6" stroke-width="1" />
<path d="M1608.1,793.78 L1611.9,789.78 L1615.7,793.78 Z" stroke="none" fill="#000000" stroke-width="1" />
<path d="M1608.1,799.58 L1611.9,803.58 L1615.7,799.58 Z" stroke="none" fill="#000000" stroke-width="1" />
<text transform="translate(1565.6,800.58) scale(0.81,1)" font-size="16" fill="#000" stroke="#000" stroke-width="0.15">20,0</text>
<rect x="1631.5" y="784.5" width="60" height="24" fill="#ffffff" stroke="#bdbdbd" stroke-width="1" />
<rect x="1632.5" y="785.5" width="58" height="22" fill="none" stroke="#e4e4e4" stroke-width="1" />
<rect x="1671.5" y="786.5" width="16" height="9" fill="#f0f0f0" stroke="#d6d6d6" stroke-width="1" />
<rect x="1671.5" y="796.5" width="16" height="9" fill="#f0f0f0" stroke="#d6d6d6" stroke-width="1" />
<path d="M1676.3,793.78 L1680.1,789.78 L1683.9,793.78 Z" stroke="none" fill="#000000" stroke-width="1" />
<path d="M1676.3,799.58 L1680.1,803.58 L1683.9,799.58 Z" stroke="none" fill="#000000" stroke-width="1" />
<text transform="translate(1633.8,800.58) scale(0.81,1)" font-size="16" fill="#000" stroke="#000" stroke-width="0.15">40,0</text>
<rect x="1711.3" y="785.78" width="16" height="16" fill="#0063b1" rx="3.5" />
<path d="M1715.5,794.08 L1718.1,796.58 L1723.1,791.38" stroke="#ffffff" fill="none" stroke-width="1.2" stroke-linecap="round" stroke-linejoin="round"/>
<rect x="1763.6" y="786.38" width="14.8" height="14.8" fill="#f3f3f3" stroke="#777777" stroke-width="1.2" rx="3.2" />
<line x1="1804.5" y1="780.88" x2="1804.5" y2="808.38" stroke="#a8a8a8" stroke-width="1" />
<line x1="1804.4" y1="780.5" x2="1876" y2="780.5" stroke="#a8a8a8" stroke-width="1" />
<text transform="translate(1210,829.5) scale(0.9,1)" font-size="15" fill="#000" text-anchor="end" font-weight="bold" stroke="#000" stroke-width="0.15">[All]:</text>
<rect x="1218.1" y="817.6" width="14.8" height="14.8" fill="#f3f3f3" stroke="#777777" stroke-width="1.2" rx="3.2" />
<line x1="1115" y1="840.5" x2="1896" y2="840.5" stroke="#a0a0a0" stroke-width="1" />
<line x1="1115" y1="841.5" x2="1896" y2="841.5" stroke="#ffffff" stroke-width="1" />
<text transform="translate(1232.5,865.7) scale(0.91,1)" font-size="15" fill="#222" text-anchor="end" stroke="#222" stroke-width="0.05">Value</text>
<rect x="1242.5" y="851.5" width="60" height="24" fill="#ffffff" stroke="#bdbdbd" stroke-width="1" />
<rect x="1243.5" y="852.5" width="58" height="22" fill="none" stroke="#e4e4e4" stroke-width="1" />
<rect x="1282.5" y="853.5" width="16" height="9" fill="#f0f0f0" stroke="#d6d6d6" stroke-width="1" />
<rect x="1282.5" y="863.5" width="16" height="9" fill="#f0f0f0" stroke="#d6d6d6" stroke-width="1" />
<path d="M1287.3,860.4 L1291.1,856.4 L1294.9,860.4 Z" stroke="none" fill="#000000" stroke-width="1" />
<path d="M1287.3,866.2 L1291.1,870.2 L1294.9,866.2 Z" stroke="none" fill="#000000" stroke-width="1" />
<text transform="translate(1244.8,867.2) scale(0.81,1)" font-size="16" fill="#000" stroke="#000" stroke-width="0.15">0,0</text>
<rect x="1310.5" y="851.5" width="60" height="24" fill="#ffffff" stroke="#bdbdbd" stroke-width="1" />
<rect x="1311.5" y="852.5" width="58" height="22" fill="none" stroke="#e4e4e4" stroke-width="1" />
<rect x="1350.5" y="853.5" width="16" height="9" fill="#f0f0f0" stroke="#d6d6d6" stroke-width="1" />
<rect x="1350.5" y="863.5" width="16" height="9" fill="#f0f0f0" stroke="#d6d6d6" stroke-width="1" />
<path d="M1355.1,860.4 L1358.9,856.4 L1362.7,860.4 Z" stroke="none" fill="#000000" stroke-width="1" />
<path d="M1355.1,866.2 L1358.9,870.2 L1362.7,866.2 Z" stroke="none" fill="#000000" stroke-width="1" />
<text transform="translate(1312.6,867.2) scale(0.81,1)" font-size="16" fill="#000" stroke="#000" stroke-width="0.15">100,0</text>
<rect x="1390.9" y="853.6" width="14.8" height="14.8" fill="#f3f3f3" stroke="#777777" stroke-width="1.2" rx="3.2" />
<rect x="1415.5" y="851.5" width="60" height="24" fill="#f0f0f0" stroke="#bdbdbd" stroke-width="1" />
<rect x="1416.5" y="852.5" width="58" height="22" fill="none" stroke="#e4e4e4" stroke-width="1" />
<rect x="1455.5" y="853.5" width="16" height="9" fill="#f0f0f0" stroke="#d6d6d6" stroke-width="1" />
<rect x="1455.5" y="863.5" width="16" height="9" fill="#f0f0f0" stroke="#d6d6d6" stroke-width="1" />
<path d="M1460.1,860.4 L1463.9,856.4 L1467.7,860.4 Z" stroke="none" fill="#555555" stroke-width="1" />
<path d="M1460.1,866.2 L1463.9,870.2 L1467.7,866.2 Z" stroke="none" fill="#555555" stroke-width="1" />
<text transform="translate(1417.6,867.2) scale(0.81,1)" font-size="16" fill="#6d6d6d" stroke="#6d6d6d" stroke-width="0.15">24,0</text>
<rect x="1483.5" y="851.5" width="60" height="24" fill="#f0f0f0" stroke="#bdbdbd" stroke-width="1" />
<rect x="1484.5" y="852.5" width="58" height="22" fill="none" stroke="#e4e4e4" stroke-width="1" />
<rect x="1523.5" y="853.5" width="16" height="9" fill="#f0f0f0" stroke="#d6d6d6" stroke-width="1" />
<rect x="1523.5" y="863.5" width="16" height="9" fill="#f0f0f0" stroke="#d6d6d6" stroke-width="1" />
<path d="M1528.1,860.4 L1531.9,856.4 L1535.7,860.4 Z" stroke="none" fill="#555555" stroke-width="1" />
<path d="M1528.1,866.2 L1531.9,870.2 L1535.7,866.2 Z" stroke="none" fill="#555555" stroke-width="1" />
<text transform="translate(1485.6,867.2) scale(0.81,1)" font-size="16" fill="#6d6d6d" stroke="#6d6d6d" stroke-width="0.15">36,0</text>
<rect x="1563.5" y="851.5" width="60" height="24" fill="#ffffff" stroke="#bdbdbd" stroke-width="1" />
<rect x="1564.5" y="852.5" width="58" height="22" fill="none" stroke="#e4e4e4" stroke-width="1" />
<rect x="1603.5" y="853.5" width="16" height="9" fill="#f0f0f0" stroke="#d6d6d6" stroke-width="1" />
<rect x="1603.5" y="863.5" width="16" height="9" fill="#f0f0f0" stroke="#d6d6d6" stroke-width="1" />
<path d="M1608.1,860.4 L1611.9,856.4 L1615.7,860.4 Z" stroke="none" fill="#000000" stroke-width="1" />
<path d="M1608.1,866.2 L1611.9,870.2 L1615.7,866.2 Z" stroke="none" fill="#000000" stroke-width="1" />
<text transform="translate(1565.6,867.2) scale(0.81,1)" font-size="16" fill="#000" stroke="#000" stroke-width="0.15">20,0</text>
<rect x="1631.5" y="851.5" width="60" height="24" fill="#ffffff" stroke="#bdbdbd" stroke-width="1" />
<rect x="1632.5" y="852.5" width="58" height="22" fill="none" stroke="#e4e4e4" stroke-width="1" />
<rect x="1671.5" y="853.5" width="16" height="9" fill="#f0f0f0" stroke="#d6d6d6" stroke-width="1" />
<rect x="1671.5" y="863.5" width="16" height="9" fill="#f0f0f0" stroke="#d6d6d6" stroke-width="1" />
<path d="M1676.3,860.4 L1680.1,856.4 L1683.9,860.4 Z" stroke="none" fill="#000000" stroke-width="1" />
<path d="M1676.3,866.2 L1680.1,870.2 L1683.9,866.2 Z" stroke="none" fill="#000000" stroke-width="1" />
<text transform="translate(1633.8,867.2) scale(0.81,1)" font-size="16" fill="#000" stroke="#000" stroke-width="0.15">40,0</text>
<rect x="1711.3" y="852.4" width="16" height="16" fill="#0063b1" rx="3.5" />
<path d="M1715.5,860.7 L1718.1,863.2 L1723.1,858" stroke="#ffffff" fill="none" stroke-width="1.2" stroke-linecap="round" stroke-linejoin="round"/>
<rect x="1763.6" y="853" width="14.8" height="14.8" fill="#f3f3f3" stroke="#777777" stroke-width="1.2" rx="3.2" />
<line x1="1804.5" y1="847.5" x2="1804.5" y2="875" stroke="#a8a8a8" stroke-width="1" />
<line x1="1804.4" y1="847.5" x2="1876" y2="847.5" stroke="#a8a8a8" stroke-width="1" />
<rect x="1119.5" y="914.5" width="214" height="25" fill="#fdfdfd" stroke="#d4d4d4" stroke-width="1" rx="4" />
<line x1="1122.5" y1="939.5" x2="1330.5" y2="939.5" stroke="#c4c4c4" stroke-width="1" />
<text x="1226" y="932" font-size="14.3" fill="#1b1b1b" text-anchor="middle" textLength="118.3" lengthAdjust="spacingAndGlyphs" stroke="#1b1b1b" stroke-width="0.15">Alarm configuration</text>
<rect x="1368.8" y="920.4" width="14.8" height="14.8" fill="#f3f3f3" stroke="#777777" stroke-width="1.2" rx="3.2" />
<text x="1389.1" y="931.5" font-size="14.3" fill="#1a1a1a" textLength="285.3" lengthAdjust="spacingAndGlyphs" stroke="#1a1a1a" stroke-width="0.15">Allow alarm (and event grabbing) while playing</text>
</svg>
</body></html>
